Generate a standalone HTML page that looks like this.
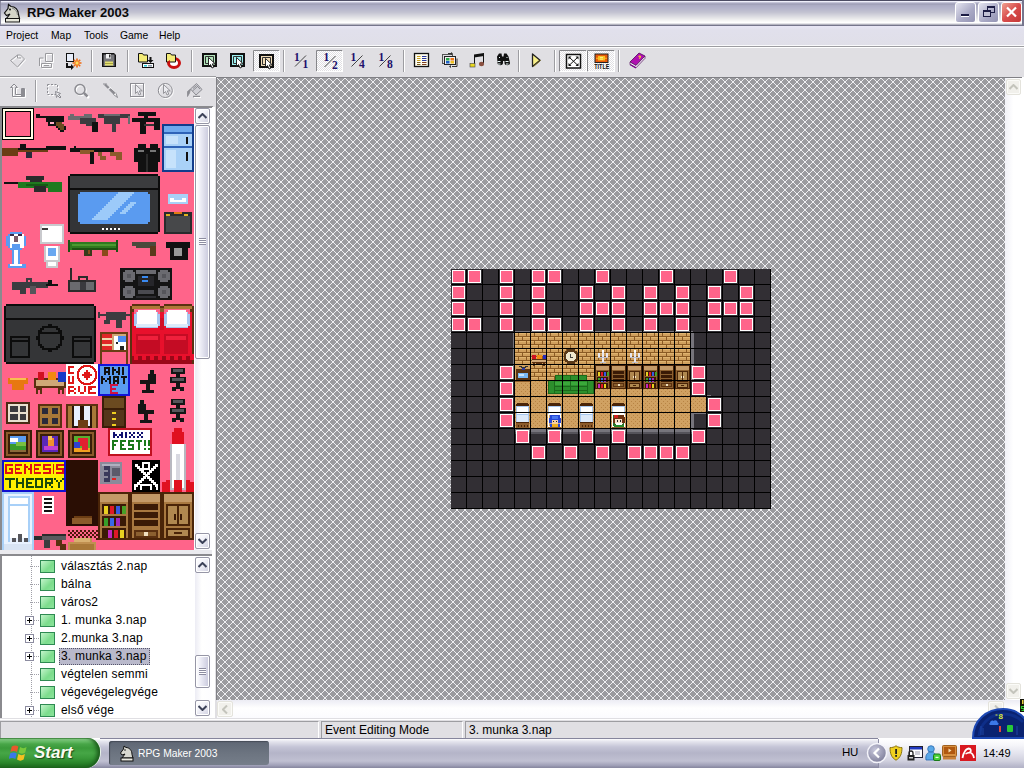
<!DOCTYPE html>
<html><head><meta charset="utf-8">
<style>
*{box-sizing:border-box;margin:0;padding:0}
html,body{width:1024px;height:768px;overflow:hidden;background:#e0dfe3;font-family:"Liberation Sans",sans-serif;font-size:12px;color:#000}
.abs{position:absolute}
#title{left:0;top:0;width:1024px;height:26px;background:linear-gradient(#4c4c64 0.5px,#eeeefa 1.5px,#c4c4d8 2.5px,#a8a8c0 3.5px,#a2a2ba 4.5px,#acacc4 5.5px,#b2b2ca 7.5px,#b8b8cc 9.5px,#c4c4d2 12.5px,#d6d6de 15.5px,#e8e8ea 18.5px,#f4f4f4 20.5px,#ffffff 22.5px,#e4e4e8 23.5px,#b4b4c0 24.5px,#75758b 25.5px)}
#title .txt{left:27px;top:5px;font-weight:bold;font-size:13px;letter-spacing:0px;color:#0a0a0a}
.wb{top:2px;width:21px;height:21px;border-radius:3px;border:1px solid #fff}
#menu{left:0;top:26px;width:1024px;height:20px;background:linear-gradient(#e8e6f6,#e1e0ec 4px,#e0dfe8)}
#menu span{position:absolute;top:3px;font-size:11.5px;transform:scaleX(.9);transform-origin:0 0}
.hsep{left:0;width:1024px;height:2px;border-top:1px solid #9d9da1;border-bottom:1px solid #fff}
#tb1{left:0;top:48px;width:1024px;height:27px;background:#e0dfe3}
#tb2{left:0;top:78px;width:216px;height:28px;background:#e0dfe3}
.vsep{width:2px;border-left:1px solid #9d9da1;border-right:1px solid #fff}
#maparea{left:216px;top:77px;width:789px;height:623px;border-left:1px solid #808085;border-top:1px solid #808085;overflow:hidden}
#status{left:0;top:719px;width:1024px;height:21px;background:#e0dfe3}
#taskbar{left:0;top:739px;width:1024px;height:29px;background:linear-gradient(#fdfdfe 0,#e8e8f0 2px,#c4c4d6 8px,#b4b4c8 14px,#c0c0d2 22px,#9c9cb4 27px,#8b8ba3 28px)}

.sbtn{position:absolute;width:15px;height:16px;border:1px solid #9696a6;border-radius:2px;background:linear-gradient(135deg,#ffffff,#f4f4fa 40%,#d0d0e0);box-shadow:0 0 0 1px #fff inset}
.sbtn svg{position:absolute;left:2px;top:4px}
.track{position:absolute;background:linear-gradient(90deg,#ececf4,#ffffff 40%,#fdfdff)}
.thumb{position:absolute;width:15px;border:1px solid #9696a6;border-radius:2px;background:linear-gradient(90deg,#ffffff,#f0f0f8 30%,#c8c8dc);box-shadow:0 0 0 1px #fff inset}
.grip{position:absolute;left:3px;width:7px;height:7px;background:repeating-linear-gradient(#8c8ca0 0,#8c8ca0 1px,#fff 1px,#fff 2px)}
.tree{position:absolute;left:0;top:554px;width:214px;height:164px;background:#fff;border-top:2px solid #8a8a8e;border-left:2px solid #8a8a8e;overflow:hidden}
.ti{position:absolute;left:-1px;height:18px;width:196px}
.ti .ic{position:absolute;left:39px;top:3px;width:15px;height:13px;border:1px solid #2e8a52;background:linear-gradient(135deg,#c4f4cc,#7cdc8c 60%,#8ce49c)}
.ti .tx{position:absolute;left:58px;top:1px;height:17px;line-height:16px;padding:0 3px 0 2px;font-size:12px;white-space:nowrap;letter-spacing:.2px}
.ti .pm{position:absolute;left:24px;top:5px;width:9px;height:9px;border:1px solid #8c8ca0;background:#fff}
.ti .pm:before{content:"";position:absolute;left:1px;top:3px;width:5px;height:1px;background:#000}
.ti .pm:after{content:"";position:absolute;left:3px;top:1px;width:1px;height:5px;background:#000}
.ti .hl{position:absolute;left:29px;top:9px;width:9px;height:1px;background:repeating-linear-gradient(90deg,#a0a0a8 0,#a0a0a8 1px,transparent 1px,transparent 2px)}
.sp{position:absolute;top:721px;height:18px;border-top:1px solid #9d9da1;border-left:1px solid #9d9da1;border-bottom:1px solid #fff;border-right:1px solid #fff;font-size:12px;line-height:16px;padding-left:3px;white-space:nowrap}
</style></head><body>
<div id="title" class="abs">
<svg class="abs" style="left:3px;top:3px" width="18" height="20" viewBox="0 0 18 20"><path d="M5.500 1.500l2.500 2c4 0 7.500 3 7.500 8l1 4h-13l3.500-4.500-3.500 1.500-2-2.500 3.500-4.500z" fill="#d4d4c8" stroke="#111" stroke-width="1.200"/><rect x="2.500" y="15.500" width="14" height="3.500" fill="#e8e8dc" stroke="#111"/><circle cx="7" cy="6.500" r="1" fill="#111"/><path d="M9 5c3 1 5 3 5.500 7" stroke="#888" fill="none"/></svg>
<div class="abs txt">RPG Maker 2003</div><div class="abs" style="left:0;top:1px;width:1px;height:24px;background:#8a8aa0"></div><div class="abs" style="left:1022px;top:0;width:2px;height:25px;background:#76768e"></div>
<div class="abs wb" style="left:955px;background:linear-gradient(135deg,#e4e4f0,#a8a8c4 60%,#9494b4)"><div class="abs" style="left:5px;top:11px;width:8px;height:3px;background:#1c1c44;border-bottom:1px solid #fff"></div></div>
<div class="abs wb" style="left:978px;background:linear-gradient(135deg,#e4e4f0,#a8a8c4 60%,#9494b4)"><div class="abs" style="left:8px;top:3px;width:8px;height:7px;border:1px solid #1c1c44;border-top-width:2px"></div><div class="abs" style="left:4px;top:7px;width:8px;height:7px;border:1px solid #1c1c44;border-top-width:2px;background:#c0c0d4"></div></div>
<div class="abs wb" style="left:1001px;background:linear-gradient(135deg,#f0a090,#d84c4c 50%,#c43838)"><svg width="19" height="18" style="position:absolute;left:0;top:0"><path d="M5 4.500l9 9M14 4.500l-9 9" stroke="#fff" stroke-width="2.200"/></svg></div>
</div>
<div id="menu" class="abs"><span style="left:6px">Project</span><span style="left:51px">Map</span><span style="left:84px">Tools</span><span style="left:120px">Game</span><span style="left:159px">Help</span></div>
<div class="abs" style="left:0;top:45px;width:1024px;height:1px;background:#fafafc"></div><div class="abs hsep" style="top:46px"></div>
<div id="tb1" class="abs"></div>
<div class="abs hsep" style="top:76px;width:216px"></div>
<div id="tb2" class="abs"></div>
<div id="maparea" class="abs">
<svg width="788" height="625" style="position:absolute;left:0;top:0" shape-rendering="crispEdges">
<defs><pattern id="hatch" width="8" height="8" patternUnits="userSpaceOnUse" x="0" y="0">
<rect width="8" height="8" fill="#9b9b9f"/>
<path fill="#efeff2" d="M0 0h1v1h-1zM1 1h1v1h-1zM2 2h1v1h-1zM3 3h1v1h-1zM4 4h1v1h-1zM5 5h1v1h-1zM6 6h1v1h-1zM7 7h1v1h-1zM7 0h1v1h-1zM6 1h1v1h-1zM5 2h1v1h-1zM4 3h1v1h-1zM3 4h1v1h-1zM2 5h1v1h-1zM1 6h1v1h-1zM0 7h1v1h-1z"/>
</pattern></defs>
<rect width="788" height="625" fill="url(#hatch)"/>
<g transform="translate(234,191)">
<path fill="#322f34" d="M0 0h320v240h-320z"/>
<path fill="#77757c" d="M63 62h179v2h-179zM62 64h2v46h-2zM240 64h3v48h-3zM64 160h178v3h-178z"/>
<path fill="#55535a" d="M64 163h178v2h-178z"/>
<path fill="#77757c" d="M240 142h3v18h-3zM243 142h12v3h-12zM256 126h4v2h-4z"/>
<path fill="#d0a05e" d="M64 64h176v48h-176z"/>
<path fill="#8a5a24" d="M64 67h176v1h-176z"/>
<path fill="#e0b470" d="M64 64h176v1h-176z"/>
<path fill="#8a5a24" d="M67 64h1v3h-1zM75 64h1v3h-1zM83 64h1v3h-1zM91 64h1v3h-1zM99 64h1v3h-1zM107 64h1v3h-1zM115 64h1v3h-1zM123 64h1v3h-1zM131 64h1v3h-1zM139 64h1v3h-1zM147 64h1v3h-1zM155 64h1v3h-1zM163 64h1v3h-1zM171 64h1v3h-1zM179 64h1v3h-1zM187 64h1v3h-1zM195 64h1v3h-1zM203 64h1v3h-1zM211 64h1v3h-1zM219 64h1v3h-1zM227 64h1v3h-1zM235 64h1v3h-1zM64 71h176v1h-176z"/>
<path fill="#e0b470" d="M64 68h176v1h-176z"/>
<path fill="#8a5a24" d="M71 68h1v3h-1zM79 68h1v3h-1zM87 68h1v3h-1zM95 68h1v3h-1zM103 68h1v3h-1zM111 68h1v3h-1zM119 68h1v3h-1zM127 68h1v3h-1zM135 68h1v3h-1zM143 68h1v3h-1zM151 68h1v3h-1zM159 68h1v3h-1zM167 68h1v3h-1zM175 68h1v3h-1zM183 68h1v3h-1zM191 68h1v3h-1zM199 68h1v3h-1zM207 68h1v3h-1zM215 68h1v3h-1zM223 68h1v3h-1zM231 68h1v3h-1zM239 68h1v3h-1zM64 75h176v1h-176z"/>
<path fill="#e0b470" d="M64 72h176v1h-176z"/>
<path fill="#8a5a24" d="M67 72h1v3h-1zM75 72h1v3h-1zM83 72h1v3h-1zM91 72h1v3h-1zM99 72h1v3h-1zM107 72h1v3h-1zM115 72h1v3h-1zM123 72h1v3h-1zM131 72h1v3h-1zM139 72h1v3h-1zM147 72h1v3h-1zM155 72h1v3h-1zM163 72h1v3h-1zM171 72h1v3h-1zM179 72h1v3h-1zM187 72h1v3h-1zM195 72h1v3h-1zM203 72h1v3h-1zM211 72h1v3h-1zM219 72h1v3h-1zM227 72h1v3h-1zM235 72h1v3h-1zM64 79h176v1h-176z"/>
<path fill="#e0b470" d="M64 76h176v1h-176z"/>
<path fill="#8a5a24" d="M71 76h1v3h-1zM79 76h1v3h-1zM87 76h1v3h-1zM95 76h1v3h-1zM103 76h1v3h-1zM111 76h1v3h-1zM119 76h1v3h-1zM127 76h1v3h-1zM135 76h1v3h-1zM143 76h1v3h-1zM151 76h1v3h-1zM159 76h1v3h-1zM167 76h1v3h-1zM175 76h1v3h-1zM183 76h1v3h-1zM191 76h1v3h-1zM199 76h1v3h-1zM207 76h1v3h-1zM215 76h1v3h-1zM223 76h1v3h-1zM231 76h1v3h-1zM239 76h1v3h-1zM64 83h176v1h-176z"/>
<path fill="#e0b470" d="M64 80h176v1h-176z"/>
<path fill="#8a5a24" d="M67 80h1v3h-1zM75 80h1v3h-1zM83 80h1v3h-1zM91 80h1v3h-1zM99 80h1v3h-1zM107 80h1v3h-1zM115 80h1v3h-1zM123 80h1v3h-1zM131 80h1v3h-1zM139 80h1v3h-1zM147 80h1v3h-1zM155 80h1v3h-1zM163 80h1v3h-1zM171 80h1v3h-1zM179 80h1v3h-1zM187 80h1v3h-1zM195 80h1v3h-1zM203 80h1v3h-1zM211 80h1v3h-1zM219 80h1v3h-1zM227 80h1v3h-1zM235 80h1v3h-1zM64 87h176v1h-176z"/>
<path fill="#e0b470" d="M64 84h176v1h-176z"/>
<path fill="#8a5a24" d="M71 84h1v3h-1zM79 84h1v3h-1zM87 84h1v3h-1zM95 84h1v3h-1zM103 84h1v3h-1zM111 84h1v3h-1zM119 84h1v3h-1zM127 84h1v3h-1zM135 84h1v3h-1zM143 84h1v3h-1zM151 84h1v3h-1zM159 84h1v3h-1zM167 84h1v3h-1zM175 84h1v3h-1zM183 84h1v3h-1zM191 84h1v3h-1zM199 84h1v3h-1zM207 84h1v3h-1zM215 84h1v3h-1zM223 84h1v3h-1zM231 84h1v3h-1zM239 84h1v3h-1zM64 91h176v1h-176z"/>
<path fill="#e0b470" d="M64 88h176v1h-176z"/>
<path fill="#8a5a24" d="M67 88h1v3h-1zM75 88h1v3h-1zM83 88h1v3h-1zM91 88h1v3h-1zM99 88h1v3h-1zM107 88h1v3h-1zM115 88h1v3h-1zM123 88h1v3h-1zM131 88h1v3h-1zM139 88h1v3h-1zM147 88h1v3h-1zM155 88h1v3h-1zM163 88h1v3h-1zM171 88h1v3h-1zM179 88h1v3h-1zM187 88h1v3h-1zM195 88h1v3h-1zM203 88h1v3h-1zM211 88h1v3h-1zM219 88h1v3h-1zM227 88h1v3h-1zM235 88h1v3h-1zM64 95h176v1h-176z"/>
<path fill="#e0b470" d="M64 92h176v1h-176z"/>
<path fill="#8a5a24" d="M71 92h1v3h-1zM79 92h1v3h-1zM87 92h1v3h-1zM95 92h1v3h-1zM103 92h1v3h-1zM111 92h1v3h-1zM119 92h1v3h-1zM127 92h1v3h-1zM135 92h1v3h-1zM143 92h1v3h-1zM151 92h1v3h-1zM159 92h1v3h-1zM167 92h1v3h-1zM175 92h1v3h-1zM183 92h1v3h-1zM191 92h1v3h-1zM199 92h1v3h-1zM207 92h1v3h-1zM215 92h1v3h-1zM223 92h1v3h-1zM231 92h1v3h-1zM239 92h1v3h-1zM64 99h176v1h-176z"/>
<path fill="#e0b470" d="M64 96h176v1h-176z"/>
<path fill="#8a5a24" d="M67 96h1v3h-1zM75 96h1v3h-1zM83 96h1v3h-1zM91 96h1v3h-1zM99 96h1v3h-1zM107 96h1v3h-1zM115 96h1v3h-1zM123 96h1v3h-1zM131 96h1v3h-1zM139 96h1v3h-1zM147 96h1v3h-1zM155 96h1v3h-1zM163 96h1v3h-1zM171 96h1v3h-1zM179 96h1v3h-1zM187 96h1v3h-1zM195 96h1v3h-1zM203 96h1v3h-1zM211 96h1v3h-1zM219 96h1v3h-1zM227 96h1v3h-1zM235 96h1v3h-1zM64 103h176v1h-176z"/>
<path fill="#e0b470" d="M64 100h176v1h-176z"/>
<path fill="#8a5a24" d="M71 100h1v3h-1zM79 100h1v3h-1zM87 100h1v3h-1zM95 100h1v3h-1zM103 100h1v3h-1zM111 100h1v3h-1zM119 100h1v3h-1zM127 100h1v3h-1zM135 100h1v3h-1zM143 100h1v3h-1zM151 100h1v3h-1zM159 100h1v3h-1zM167 100h1v3h-1zM175 100h1v3h-1zM183 100h1v3h-1zM191 100h1v3h-1zM199 100h1v3h-1zM207 100h1v3h-1zM215 100h1v3h-1zM223 100h1v3h-1zM231 100h1v3h-1zM239 100h1v3h-1zM64 107h176v1h-176z"/>
<path fill="#e0b470" d="M64 104h176v1h-176z"/>
<path fill="#8a5a24" d="M67 104h1v3h-1zM75 104h1v3h-1zM83 104h1v3h-1zM91 104h1v3h-1zM99 104h1v3h-1zM107 104h1v3h-1zM115 104h1v3h-1zM123 104h1v3h-1zM131 104h1v3h-1zM139 104h1v3h-1zM147 104h1v3h-1zM155 104h1v3h-1zM163 104h1v3h-1zM171 104h1v3h-1zM179 104h1v3h-1zM187 104h1v3h-1zM195 104h1v3h-1zM203 104h1v3h-1zM211 104h1v3h-1zM219 104h1v3h-1zM227 104h1v3h-1zM235 104h1v3h-1zM64 111h176v1h-176z"/>
<path fill="#e0b470" d="M64 108h176v1h-176z"/>
<path fill="#8a5a24" d="M71 108h1v3h-1zM79 108h1v3h-1zM87 108h1v3h-1zM95 108h1v3h-1zM103 108h1v3h-1zM111 108h1v3h-1zM119 108h1v3h-1zM127 108h1v3h-1zM135 108h1v3h-1zM143 108h1v3h-1zM151 108h1v3h-1zM159 108h1v3h-1zM167 108h1v3h-1zM175 108h1v3h-1zM183 108h1v3h-1zM191 108h1v3h-1zM199 108h1v3h-1zM207 108h1v3h-1zM215 108h1v3h-1zM223 108h1v3h-1zM231 108h1v3h-1zM239 108h1v3h-1z"/>
<path fill="#d0a162" d="M64 112h176v48h-176zM240 128h16v16h-16z"/>
<path fill="#b88444" d="M64 112h1v1h-1zM68 112h1v1h-1zM72 112h1v1h-1zM76 112h1v1h-1zM80 112h1v1h-1zM84 112h1v1h-1zM88 112h1v1h-1zM92 112h1v1h-1zM96 112h1v1h-1zM100 112h1v1h-1zM104 112h1v1h-1zM108 112h1v1h-1zM112 112h1v1h-1zM116 112h1v1h-1zM120 112h1v1h-1zM124 112h1v1h-1zM128 112h1v1h-1zM132 112h1v1h-1zM136 112h1v1h-1zM140 112h1v1h-1zM144 112h1v1h-1zM148 112h1v1h-1zM152 112h1v1h-1zM156 112h1v1h-1zM160 112h1v1h-1zM164 112h1v1h-1zM168 112h1v1h-1zM172 112h1v1h-1zM176 112h1v1h-1zM180 112h1v1h-1zM184 112h1v1h-1zM188 112h1v1h-1zM192 112h1v1h-1zM196 112h1v1h-1zM200 112h1v1h-1zM204 112h1v1h-1zM208 112h1v1h-1zM212 112h1v1h-1zM216 112h1v1h-1zM220 112h1v1h-1zM224 112h1v1h-1zM228 112h1v1h-1zM232 112h1v1h-1zM236 112h1v1h-1zM66 114h1v1h-1zM70 114h1v1h-1zM74 114h1v1h-1zM78 114h1v1h-1zM82 114h1v1h-1zM86 114h1v1h-1zM90 114h1v1h-1zM94 114h1v1h-1zM98 114h1v1h-1zM102 114h1v1h-1zM106 114h1v1h-1zM110 114h1v1h-1zM114 114h1v1h-1zM118 114h1v1h-1zM122 114h1v1h-1zM126 114h1v1h-1zM130 114h1v1h-1zM134 114h1v1h-1zM138 114h1v1h-1zM142 114h1v1h-1zM146 114h1v1h-1zM150 114h1v1h-1zM154 114h1v1h-1zM158 114h1v1h-1zM162 114h1v1h-1zM166 114h1v1h-1zM170 114h1v1h-1zM174 114h1v1h-1zM178 114h1v1h-1zM182 114h1v1h-1zM186 114h1v1h-1zM190 114h1v1h-1zM194 114h1v1h-1zM198 114h1v1h-1zM202 114h1v1h-1zM206 114h1v1h-1zM210 114h1v1h-1zM214 114h1v1h-1zM218 114h1v1h-1zM222 114h1v1h-1zM226 114h1v1h-1zM230 114h1v1h-1zM234 114h1v1h-1zM238 114h1v1h-1zM64 116h1v1h-1zM68 116h1v1h-1zM72 116h1v1h-1zM76 116h1v1h-1zM80 116h1v1h-1zM84 116h1v1h-1zM88 116h1v1h-1zM92 116h1v1h-1zM96 116h1v1h-1zM100 116h1v1h-1zM104 116h1v1h-1zM108 116h1v1h-1zM112 116h1v1h-1zM116 116h1v1h-1zM120 116h1v1h-1zM124 116h1v1h-1zM128 116h1v1h-1zM132 116h1v1h-1zM136 116h1v1h-1zM140 116h1v1h-1zM144 116h1v1h-1zM148 116h1v1h-1zM152 116h1v1h-1zM156 116h1v1h-1zM160 116h1v1h-1zM164 116h1v1h-1zM168 116h1v1h-1zM172 116h1v1h-1zM176 116h1v1h-1zM180 116h1v1h-1zM184 116h1v1h-1zM188 116h1v1h-1zM192 116h1v1h-1zM196 116h1v1h-1zM200 116h1v1h-1zM204 116h1v1h-1zM208 116h1v1h-1zM212 116h1v1h-1zM216 116h1v1h-1zM220 116h1v1h-1zM224 116h1v1h-1zM228 116h1v1h-1zM232 116h1v1h-1zM236 116h1v1h-1zM66 118h1v1h-1zM70 118h1v1h-1zM74 118h1v1h-1zM78 118h1v1h-1zM82 118h1v1h-1zM86 118h1v1h-1zM90 118h1v1h-1zM94 118h1v1h-1zM98 118h1v1h-1zM102 118h1v1h-1zM106 118h1v1h-1zM110 118h1v1h-1zM114 118h1v1h-1zM118 118h1v1h-1zM122 118h1v1h-1zM126 118h1v1h-1zM130 118h1v1h-1zM134 118h1v1h-1zM138 118h1v1h-1zM142 118h1v1h-1zM146 118h1v1h-1zM150 118h1v1h-1zM154 118h1v1h-1zM158 118h1v1h-1zM162 118h1v1h-1zM166 118h1v1h-1zM170 118h1v1h-1zM174 118h1v1h-1zM178 118h1v1h-1zM182 118h1v1h-1zM186 118h1v1h-1zM190 118h1v1h-1zM194 118h1v1h-1zM198 118h1v1h-1zM202 118h1v1h-1zM206 118h1v1h-1zM210 118h1v1h-1zM214 118h1v1h-1zM218 118h1v1h-1zM222 118h1v1h-1zM226 118h1v1h-1zM230 118h1v1h-1zM234 118h1v1h-1zM238 118h1v1h-1zM64 120h1v1h-1zM68 120h1v1h-1zM72 120h1v1h-1zM76 120h1v1h-1zM80 120h1v1h-1zM84 120h1v1h-1zM88 120h1v1h-1zM92 120h1v1h-1zM96 120h1v1h-1zM100 120h1v1h-1zM104 120h1v1h-1zM108 120h1v1h-1zM112 120h1v1h-1zM116 120h1v1h-1zM120 120h1v1h-1zM124 120h1v1h-1zM128 120h1v1h-1zM132 120h1v1h-1zM136 120h1v1h-1zM140 120h1v1h-1zM144 120h1v1h-1zM148 120h1v1h-1zM152 120h1v1h-1zM156 120h1v1h-1zM160 120h1v1h-1zM164 120h1v1h-1zM168 120h1v1h-1zM172 120h1v1h-1zM176 120h1v1h-1zM180 120h1v1h-1zM184 120h1v1h-1zM188 120h1v1h-1zM192 120h1v1h-1zM196 120h1v1h-1zM200 120h1v1h-1zM204 120h1v1h-1zM208 120h1v1h-1zM212 120h1v1h-1zM216 120h1v1h-1zM220 120h1v1h-1zM224 120h1v1h-1zM228 120h1v1h-1zM232 120h1v1h-1zM236 120h1v1h-1zM66 122h1v1h-1zM70 122h1v1h-1zM74 122h1v1h-1zM78 122h1v1h-1zM82 122h1v1h-1zM86 122h1v1h-1zM90 122h1v1h-1zM94 122h1v1h-1zM98 122h1v1h-1zM102 122h1v1h-1zM106 122h1v1h-1zM110 122h1v1h-1zM114 122h1v1h-1zM118 122h1v1h-1zM122 122h1v1h-1zM126 122h1v1h-1zM130 122h1v1h-1zM134 122h1v1h-1zM138 122h1v1h-1zM142 122h1v1h-1zM146 122h1v1h-1zM150 122h1v1h-1zM154 122h1v1h-1zM158 122h1v1h-1zM162 122h1v1h-1zM166 122h1v1h-1zM170 122h1v1h-1zM174 122h1v1h-1zM178 122h1v1h-1zM182 122h1v1h-1zM186 122h1v1h-1zM190 122h1v1h-1zM194 122h1v1h-1zM198 122h1v1h-1zM202 122h1v1h-1zM206 122h1v1h-1zM210 122h1v1h-1zM214 122h1v1h-1zM218 122h1v1h-1zM222 122h1v1h-1zM226 122h1v1h-1zM230 122h1v1h-1zM234 122h1v1h-1zM238 122h1v1h-1zM64 124h1v1h-1zM68 124h1v1h-1zM72 124h1v1h-1zM76 124h1v1h-1zM80 124h1v1h-1zM84 124h1v1h-1zM88 124h1v1h-1zM92 124h1v1h-1zM96 124h1v1h-1zM100 124h1v1h-1zM104 124h1v1h-1zM108 124h1v1h-1zM112 124h1v1h-1zM116 124h1v1h-1zM120 124h1v1h-1zM124 124h1v1h-1zM128 124h1v1h-1zM132 124h1v1h-1zM136 124h1v1h-1zM140 124h1v1h-1zM144 124h1v1h-1zM148 124h1v1h-1zM152 124h1v1h-1zM156 124h1v1h-1zM160 124h1v1h-1zM164 124h1v1h-1zM168 124h1v1h-1zM172 124h1v1h-1zM176 124h1v1h-1zM180 124h1v1h-1zM184 124h1v1h-1zM188 124h1v1h-1zM192 124h1v1h-1zM196 124h1v1h-1zM200 124h1v1h-1zM204 124h1v1h-1zM208 124h1v1h-1zM212 124h1v1h-1zM216 124h1v1h-1zM220 124h1v1h-1zM224 124h1v1h-1zM228 124h1v1h-1zM232 124h1v1h-1zM236 124h1v1h-1zM66 126h1v1h-1zM70 126h1v1h-1zM74 126h1v1h-1zM78 126h1v1h-1zM82 126h1v1h-1zM86 126h1v1h-1zM90 126h1v1h-1zM94 126h1v1h-1zM98 126h1v1h-1zM102 126h1v1h-1zM106 126h1v1h-1zM110 126h1v1h-1zM114 126h1v1h-1zM118 126h1v1h-1zM122 126h1v1h-1zM126 126h1v1h-1zM130 126h1v1h-1zM134 126h1v1h-1zM138 126h1v1h-1zM142 126h1v1h-1zM146 126h1v1h-1zM150 126h1v1h-1zM154 126h1v1h-1zM158 126h1v1h-1zM162 126h1v1h-1zM166 126h1v1h-1zM170 126h1v1h-1zM174 126h1v1h-1zM178 126h1v1h-1zM182 126h1v1h-1zM186 126h1v1h-1zM190 126h1v1h-1zM194 126h1v1h-1zM198 126h1v1h-1zM202 126h1v1h-1zM206 126h1v1h-1zM210 126h1v1h-1zM214 126h1v1h-1zM218 126h1v1h-1zM222 126h1v1h-1zM226 126h1v1h-1zM230 126h1v1h-1zM234 126h1v1h-1zM238 126h1v1h-1zM64 128h1v1h-1zM68 128h1v1h-1zM72 128h1v1h-1zM76 128h1v1h-1zM80 128h1v1h-1zM84 128h1v1h-1zM88 128h1v1h-1zM92 128h1v1h-1zM96 128h1v1h-1zM100 128h1v1h-1zM104 128h1v1h-1zM108 128h1v1h-1zM112 128h1v1h-1zM116 128h1v1h-1zM120 128h1v1h-1zM124 128h1v1h-1zM128 128h1v1h-1zM132 128h1v1h-1zM136 128h1v1h-1zM140 128h1v1h-1zM144 128h1v1h-1zM148 128h1v1h-1zM152 128h1v1h-1zM156 128h1v1h-1zM160 128h1v1h-1zM164 128h1v1h-1zM168 128h1v1h-1zM172 128h1v1h-1zM176 128h1v1h-1zM180 128h1v1h-1zM184 128h1v1h-1zM188 128h1v1h-1zM192 128h1v1h-1zM196 128h1v1h-1zM200 128h1v1h-1zM204 128h1v1h-1zM208 128h1v1h-1zM212 128h1v1h-1zM216 128h1v1h-1zM220 128h1v1h-1zM224 128h1v1h-1zM228 128h1v1h-1zM232 128h1v1h-1zM236 128h1v1h-1zM66 130h1v1h-1zM70 130h1v1h-1zM74 130h1v1h-1zM78 130h1v1h-1zM82 130h1v1h-1zM86 130h1v1h-1zM90 130h1v1h-1zM94 130h1v1h-1zM98 130h1v1h-1zM102 130h1v1h-1zM106 130h1v1h-1zM110 130h1v1h-1zM114 130h1v1h-1zM118 130h1v1h-1zM122 130h1v1h-1zM126 130h1v1h-1zM130 130h1v1h-1zM134 130h1v1h-1zM138 130h1v1h-1zM142 130h1v1h-1zM146 130h1v1h-1zM150 130h1v1h-1zM154 130h1v1h-1zM158 130h1v1h-1zM162 130h1v1h-1zM166 130h1v1h-1zM170 130h1v1h-1zM174 130h1v1h-1zM178 130h1v1h-1zM182 130h1v1h-1zM186 130h1v1h-1zM190 130h1v1h-1zM194 130h1v1h-1zM198 130h1v1h-1zM202 130h1v1h-1zM206 130h1v1h-1zM210 130h1v1h-1zM214 130h1v1h-1zM218 130h1v1h-1zM222 130h1v1h-1zM226 130h1v1h-1zM230 130h1v1h-1zM234 130h1v1h-1zM238 130h1v1h-1zM64 132h1v1h-1zM68 132h1v1h-1zM72 132h1v1h-1zM76 132h1v1h-1zM80 132h1v1h-1zM84 132h1v1h-1zM88 132h1v1h-1zM92 132h1v1h-1zM96 132h1v1h-1zM100 132h1v1h-1zM104 132h1v1h-1zM108 132h1v1h-1zM112 132h1v1h-1zM116 132h1v1h-1zM120 132h1v1h-1zM124 132h1v1h-1zM128 132h1v1h-1zM132 132h1v1h-1zM136 132h1v1h-1zM140 132h1v1h-1zM144 132h1v1h-1zM148 132h1v1h-1zM152 132h1v1h-1zM156 132h1v1h-1zM160 132h1v1h-1zM164 132h1v1h-1zM168 132h1v1h-1zM172 132h1v1h-1zM176 132h1v1h-1zM180 132h1v1h-1zM184 132h1v1h-1zM188 132h1v1h-1zM192 132h1v1h-1zM196 132h1v1h-1zM200 132h1v1h-1zM204 132h1v1h-1zM208 132h1v1h-1zM212 132h1v1h-1zM216 132h1v1h-1zM220 132h1v1h-1zM224 132h1v1h-1zM228 132h1v1h-1zM232 132h1v1h-1zM236 132h1v1h-1zM66 134h1v1h-1zM70 134h1v1h-1zM74 134h1v1h-1zM78 134h1v1h-1zM82 134h1v1h-1zM86 134h1v1h-1zM90 134h1v1h-1zM94 134h1v1h-1zM98 134h1v1h-1zM102 134h1v1h-1zM106 134h1v1h-1zM110 134h1v1h-1zM114 134h1v1h-1zM118 134h1v1h-1zM122 134h1v1h-1zM126 134h1v1h-1zM130 134h1v1h-1zM134 134h1v1h-1zM138 134h1v1h-1zM142 134h1v1h-1zM146 134h1v1h-1zM150 134h1v1h-1zM154 134h1v1h-1zM158 134h1v1h-1zM162 134h1v1h-1zM166 134h1v1h-1zM170 134h1v1h-1zM174 134h1v1h-1zM178 134h1v1h-1zM182 134h1v1h-1zM186 134h1v1h-1zM190 134h1v1h-1zM194 134h1v1h-1zM198 134h1v1h-1zM202 134h1v1h-1zM206 134h1v1h-1zM210 134h1v1h-1zM214 134h1v1h-1zM218 134h1v1h-1zM222 134h1v1h-1zM226 134h1v1h-1zM230 134h1v1h-1zM234 134h1v1h-1zM238 134h1v1h-1zM64 136h1v1h-1zM68 136h1v1h-1zM72 136h1v1h-1zM76 136h1v1h-1zM80 136h1v1h-1zM84 136h1v1h-1zM88 136h1v1h-1zM92 136h1v1h-1zM96 136h1v1h-1zM100 136h1v1h-1zM104 136h1v1h-1zM108 136h1v1h-1zM112 136h1v1h-1zM116 136h1v1h-1zM120 136h1v1h-1zM124 136h1v1h-1zM128 136h1v1h-1zM132 136h1v1h-1zM136 136h1v1h-1zM140 136h1v1h-1zM144 136h1v1h-1zM148 136h1v1h-1zM152 136h1v1h-1zM156 136h1v1h-1zM160 136h1v1h-1zM164 136h1v1h-1zM168 136h1v1h-1zM172 136h1v1h-1zM176 136h1v1h-1zM180 136h1v1h-1zM184 136h1v1h-1zM188 136h1v1h-1zM192 136h1v1h-1zM196 136h1v1h-1zM200 136h1v1h-1zM204 136h1v1h-1zM208 136h1v1h-1zM212 136h1v1h-1zM216 136h1v1h-1zM220 136h1v1h-1zM224 136h1v1h-1zM228 136h1v1h-1zM232 136h1v1h-1zM236 136h1v1h-1zM66 138h1v1h-1zM70 138h1v1h-1zM74 138h1v1h-1zM78 138h1v1h-1zM82 138h1v1h-1zM86 138h1v1h-1zM90 138h1v1h-1zM94 138h1v1h-1zM98 138h1v1h-1zM102 138h1v1h-1zM106 138h1v1h-1zM110 138h1v1h-1zM114 138h1v1h-1zM118 138h1v1h-1zM122 138h1v1h-1zM126 138h1v1h-1zM130 138h1v1h-1zM134 138h1v1h-1zM138 138h1v1h-1zM142 138h1v1h-1zM146 138h1v1h-1zM150 138h1v1h-1zM154 138h1v1h-1zM158 138h1v1h-1zM162 138h1v1h-1zM166 138h1v1h-1zM170 138h1v1h-1zM174 138h1v1h-1zM178 138h1v1h-1zM182 138h1v1h-1zM186 138h1v1h-1zM190 138h1v1h-1zM194 138h1v1h-1zM198 138h1v1h-1zM202 138h1v1h-1zM206 138h1v1h-1zM210 138h1v1h-1zM214 138h1v1h-1zM218 138h1v1h-1zM222 138h1v1h-1zM226 138h1v1h-1zM230 138h1v1h-1zM234 138h1v1h-1zM238 138h1v1h-1zM64 140h1v1h-1zM68 140h1v1h-1zM72 140h1v1h-1zM76 140h1v1h-1zM80 140h1v1h-1zM84 140h1v1h-1zM88 140h1v1h-1zM92 140h1v1h-1zM96 140h1v1h-1zM100 140h1v1h-1zM104 140h1v1h-1zM108 140h1v1h-1zM112 140h1v1h-1zM116 140h1v1h-1zM120 140h1v1h-1zM124 140h1v1h-1zM128 140h1v1h-1zM132 140h1v1h-1zM136 140h1v1h-1zM140 140h1v1h-1zM144 140h1v1h-1zM148 140h1v1h-1zM152 140h1v1h-1zM156 140h1v1h-1zM160 140h1v1h-1zM164 140h1v1h-1zM168 140h1v1h-1zM172 140h1v1h-1zM176 140h1v1h-1zM180 140h1v1h-1zM184 140h1v1h-1zM188 140h1v1h-1zM192 140h1v1h-1zM196 140h1v1h-1zM200 140h1v1h-1zM204 140h1v1h-1zM208 140h1v1h-1zM212 140h1v1h-1zM216 140h1v1h-1zM220 140h1v1h-1zM224 140h1v1h-1zM228 140h1v1h-1zM232 140h1v1h-1zM236 140h1v1h-1zM66 142h1v1h-1zM70 142h1v1h-1zM74 142h1v1h-1zM78 142h1v1h-1zM82 142h1v1h-1zM86 142h1v1h-1zM90 142h1v1h-1zM94 142h1v1h-1zM98 142h1v1h-1zM102 142h1v1h-1zM106 142h1v1h-1zM110 142h1v1h-1zM114 142h1v1h-1zM118 142h1v1h-1zM122 142h1v1h-1zM126 142h1v1h-1zM130 142h1v1h-1zM134 142h1v1h-1zM138 142h1v1h-1zM142 142h1v1h-1zM146 142h1v1h-1zM150 142h1v1h-1zM154 142h1v1h-1zM158 142h1v1h-1zM162 142h1v1h-1zM166 142h1v1h-1zM170 142h1v1h-1zM174 142h1v1h-1zM178 142h1v1h-1zM182 142h1v1h-1zM186 142h1v1h-1zM190 142h1v1h-1zM194 142h1v1h-1zM198 142h1v1h-1zM202 142h1v1h-1zM206 142h1v1h-1zM210 142h1v1h-1zM214 142h1v1h-1zM218 142h1v1h-1zM222 142h1v1h-1zM226 142h1v1h-1zM230 142h1v1h-1zM234 142h1v1h-1zM238 142h1v1h-1zM64 144h1v1h-1zM68 144h1v1h-1zM72 144h1v1h-1zM76 144h1v1h-1zM80 144h1v1h-1zM84 144h1v1h-1zM88 144h1v1h-1zM92 144h1v1h-1zM96 144h1v1h-1zM100 144h1v1h-1zM104 144h1v1h-1zM108 144h1v1h-1zM112 144h1v1h-1zM116 144h1v1h-1zM120 144h1v1h-1zM124 144h1v1h-1zM128 144h1v1h-1zM132 144h1v1h-1zM136 144h1v1h-1zM140 144h1v1h-1zM144 144h1v1h-1zM148 144h1v1h-1zM152 144h1v1h-1zM156 144h1v1h-1zM160 144h1v1h-1zM164 144h1v1h-1zM168 144h1v1h-1zM172 144h1v1h-1zM176 144h1v1h-1zM180 144h1v1h-1zM184 144h1v1h-1zM188 144h1v1h-1zM192 144h1v1h-1zM196 144h1v1h-1zM200 144h1v1h-1zM204 144h1v1h-1zM208 144h1v1h-1zM212 144h1v1h-1zM216 144h1v1h-1zM220 144h1v1h-1zM224 144h1v1h-1zM228 144h1v1h-1zM232 144h1v1h-1zM236 144h1v1h-1zM66 146h1v1h-1zM70 146h1v1h-1zM74 146h1v1h-1zM78 146h1v1h-1zM82 146h1v1h-1zM86 146h1v1h-1zM90 146h1v1h-1zM94 146h1v1h-1zM98 146h1v1h-1zM102 146h1v1h-1zM106 146h1v1h-1zM110 146h1v1h-1zM114 146h1v1h-1zM118 146h1v1h-1zM122 146h1v1h-1zM126 146h1v1h-1zM130 146h1v1h-1zM134 146h1v1h-1zM138 146h1v1h-1zM142 146h1v1h-1zM146 146h1v1h-1zM150 146h1v1h-1zM154 146h1v1h-1zM158 146h1v1h-1zM162 146h1v1h-1zM166 146h1v1h-1zM170 146h1v1h-1zM174 146h1v1h-1zM178 146h1v1h-1zM182 146h1v1h-1zM186 146h1v1h-1zM190 146h1v1h-1zM194 146h1v1h-1zM198 146h1v1h-1zM202 146h1v1h-1zM206 146h1v1h-1zM210 146h1v1h-1zM214 146h1v1h-1zM218 146h1v1h-1zM222 146h1v1h-1zM226 146h1v1h-1zM230 146h1v1h-1zM234 146h1v1h-1zM238 146h1v1h-1zM64 148h1v1h-1zM68 148h1v1h-1zM72 148h1v1h-1zM76 148h1v1h-1zM80 148h1v1h-1zM84 148h1v1h-1zM88 148h1v1h-1zM92 148h1v1h-1zM96 148h1v1h-1zM100 148h1v1h-1zM104 148h1v1h-1zM108 148h1v1h-1zM112 148h1v1h-1zM116 148h1v1h-1zM120 148h1v1h-1zM124 148h1v1h-1zM128 148h1v1h-1zM132 148h1v1h-1zM136 148h1v1h-1zM140 148h1v1h-1zM144 148h1v1h-1zM148 148h1v1h-1zM152 148h1v1h-1zM156 148h1v1h-1zM160 148h1v1h-1zM164 148h1v1h-1zM168 148h1v1h-1zM172 148h1v1h-1zM176 148h1v1h-1zM180 148h1v1h-1zM184 148h1v1h-1zM188 148h1v1h-1zM192 148h1v1h-1zM196 148h1v1h-1zM200 148h1v1h-1zM204 148h1v1h-1zM208 148h1v1h-1zM212 148h1v1h-1zM216 148h1v1h-1zM220 148h1v1h-1zM224 148h1v1h-1zM228 148h1v1h-1zM232 148h1v1h-1zM236 148h1v1h-1zM66 150h1v1h-1zM70 150h1v1h-1zM74 150h1v1h-1zM78 150h1v1h-1zM82 150h1v1h-1zM86 150h1v1h-1zM90 150h1v1h-1zM94 150h1v1h-1zM98 150h1v1h-1zM102 150h1v1h-1zM106 150h1v1h-1zM110 150h1v1h-1zM114 150h1v1h-1zM118 150h1v1h-1zM122 150h1v1h-1zM126 150h1v1h-1zM130 150h1v1h-1zM134 150h1v1h-1zM138 150h1v1h-1zM142 150h1v1h-1zM146 150h1v1h-1zM150 150h1v1h-1zM154 150h1v1h-1zM158 150h1v1h-1zM162 150h1v1h-1zM166 150h1v1h-1zM170 150h1v1h-1zM174 150h1v1h-1zM178 150h1v1h-1zM182 150h1v1h-1zM186 150h1v1h-1zM190 150h1v1h-1zM194 150h1v1h-1zM198 150h1v1h-1zM202 150h1v1h-1zM206 150h1v1h-1zM210 150h1v1h-1zM214 150h1v1h-1zM218 150h1v1h-1zM222 150h1v1h-1zM226 150h1v1h-1zM230 150h1v1h-1zM234 150h1v1h-1zM238 150h1v1h-1zM64 152h1v1h-1zM68 152h1v1h-1zM72 152h1v1h-1zM76 152h1v1h-1zM80 152h1v1h-1zM84 152h1v1h-1zM88 152h1v1h-1zM92 152h1v1h-1zM96 152h1v1h-1zM100 152h1v1h-1zM104 152h1v1h-1zM108 152h1v1h-1zM112 152h1v1h-1zM116 152h1v1h-1zM120 152h1v1h-1zM124 152h1v1h-1zM128 152h1v1h-1zM132 152h1v1h-1zM136 152h1v1h-1zM140 152h1v1h-1zM144 152h1v1h-1zM148 152h1v1h-1zM152 152h1v1h-1zM156 152h1v1h-1zM160 152h1v1h-1zM164 152h1v1h-1zM168 152h1v1h-1zM172 152h1v1h-1zM176 152h1v1h-1zM180 152h1v1h-1zM184 152h1v1h-1zM188 152h1v1h-1zM192 152h1v1h-1zM196 152h1v1h-1zM200 152h1v1h-1zM204 152h1v1h-1zM208 152h1v1h-1zM212 152h1v1h-1zM216 152h1v1h-1zM220 152h1v1h-1zM224 152h1v1h-1zM228 152h1v1h-1zM232 152h1v1h-1zM236 152h1v1h-1zM66 154h1v1h-1zM70 154h1v1h-1zM74 154h1v1h-1zM78 154h1v1h-1zM82 154h1v1h-1zM86 154h1v1h-1zM90 154h1v1h-1zM94 154h1v1h-1zM98 154h1v1h-1zM102 154h1v1h-1zM106 154h1v1h-1zM110 154h1v1h-1zM114 154h1v1h-1zM118 154h1v1h-1zM122 154h1v1h-1zM126 154h1v1h-1zM130 154h1v1h-1zM134 154h1v1h-1zM138 154h1v1h-1zM142 154h1v1h-1zM146 154h1v1h-1zM150 154h1v1h-1zM154 154h1v1h-1zM158 154h1v1h-1zM162 154h1v1h-1zM166 154h1v1h-1zM170 154h1v1h-1zM174 154h1v1h-1zM178 154h1v1h-1zM182 154h1v1h-1zM186 154h1v1h-1zM190 154h1v1h-1zM194 154h1v1h-1zM198 154h1v1h-1zM202 154h1v1h-1zM206 154h1v1h-1zM210 154h1v1h-1zM214 154h1v1h-1zM218 154h1v1h-1zM222 154h1v1h-1zM226 154h1v1h-1zM230 154h1v1h-1zM234 154h1v1h-1zM238 154h1v1h-1zM64 156h1v1h-1zM68 156h1v1h-1zM72 156h1v1h-1zM76 156h1v1h-1zM80 156h1v1h-1zM84 156h1v1h-1zM88 156h1v1h-1zM92 156h1v1h-1zM96 156h1v1h-1zM100 156h1v1h-1zM104 156h1v1h-1zM108 156h1v1h-1zM112 156h1v1h-1zM116 156h1v1h-1zM120 156h1v1h-1zM124 156h1v1h-1zM128 156h1v1h-1zM132 156h1v1h-1zM136 156h1v1h-1zM140 156h1v1h-1zM144 156h1v1h-1zM148 156h1v1h-1zM152 156h1v1h-1zM156 156h1v1h-1zM160 156h1v1h-1zM164 156h1v1h-1zM168 156h1v1h-1zM172 156h1v1h-1zM176 156h1v1h-1zM180 156h1v1h-1zM184 156h1v1h-1zM188 156h1v1h-1zM192 156h1v1h-1zM196 156h1v1h-1zM200 156h1v1h-1zM204 156h1v1h-1zM208 156h1v1h-1zM212 156h1v1h-1zM216 156h1v1h-1zM220 156h1v1h-1zM224 156h1v1h-1zM228 156h1v1h-1zM232 156h1v1h-1zM236 156h1v1h-1zM66 158h1v1h-1zM70 158h1v1h-1zM74 158h1v1h-1zM78 158h1v1h-1zM82 158h1v1h-1zM86 158h1v1h-1zM90 158h1v1h-1zM94 158h1v1h-1zM98 158h1v1h-1zM102 158h1v1h-1zM106 158h1v1h-1zM110 158h1v1h-1zM114 158h1v1h-1zM118 158h1v1h-1zM122 158h1v1h-1zM126 158h1v1h-1zM130 158h1v1h-1zM134 158h1v1h-1zM138 158h1v1h-1zM142 158h1v1h-1zM146 158h1v1h-1zM150 158h1v1h-1zM154 158h1v1h-1zM158 158h1v1h-1zM162 158h1v1h-1zM166 158h1v1h-1zM170 158h1v1h-1zM174 158h1v1h-1zM178 158h1v1h-1zM182 158h1v1h-1zM186 158h1v1h-1zM190 158h1v1h-1zM194 158h1v1h-1zM198 158h1v1h-1zM202 158h1v1h-1zM206 158h1v1h-1zM210 158h1v1h-1zM214 158h1v1h-1zM218 158h1v1h-1zM222 158h1v1h-1zM226 158h1v1h-1zM230 158h1v1h-1zM234 158h1v1h-1zM238 158h1v1h-1zM240 128h1v1h-1zM244 128h1v1h-1zM248 128h1v1h-1zM252 128h1v1h-1zM242 130h1v1h-1zM246 130h1v1h-1zM250 130h1v1h-1zM254 130h1v1h-1zM240 132h1v1h-1zM244 132h1v1h-1zM248 132h1v1h-1zM252 132h1v1h-1zM242 134h1v1h-1zM246 134h1v1h-1zM250 134h1v1h-1zM254 134h1v1h-1zM240 136h1v1h-1zM244 136h1v1h-1zM248 136h1v1h-1zM252 136h1v1h-1zM242 138h1v1h-1zM246 138h1v1h-1zM250 138h1v1h-1zM254 138h1v1h-1zM240 140h1v1h-1zM244 140h1v1h-1zM248 140h1v1h-1zM252 140h1v1h-1zM242 142h1v1h-1zM246 142h1v1h-1zM250 142h1v1h-1zM254 142h1v1h-1z"/>
<path fill="#8c5c2a" d="M64 112h16v1h-16z"/>
<path fill="#d0a05e" d="M64 96h16v16h-16z"/>
<path fill="#5a3414" d="M65 100h14v11h-14z"/>
<path fill="#7ab8f4" d="M67 104h10v5h-10z"/>
<path fill="#c8e4fc" d="M68 105h5v2h-5z"/>
<path fill="#333" d="M68 97h3v1h-3zM74 97h3v1h-3zM70 98h5v1h-5z"/>
<path fill="#2838a0" d="M71 99h3v2h-3z"/>
<path fill="#3a2008" d="M66 111h12v1h-12z"/>
<path fill="#5a3010" d="M81 90h14v1h-14z"/>
<path fill="#d0a878" d="M81 91h14v2h-14z"/>
<path fill="#5a3010" d="M81 93h14v1h-14zM82 94h2v3h-2zM92 94h2v3h-2zM85 94h6v1h-6z"/>
<path fill="#d01020" d="M81 86h4v4h-4z"/>
<path fill="#f08a10" d="M86 86h5v4h-5z"/>
<path fill="#2828b8" d="M92 86h3v4h-3z"/>
<path fill="#5a3818" d="M116 80h8v15h-8zM114 82h12v11h-12zM113 84h14v7h-14z"/>
<path fill="#efe6cc" d="M117 83h6v9h-6zM116 84h8v7h-8zM115 85h10v5h-10z"/>
<path fill="#444" d="M119 85h1v4h-1zM119 88h3v1h-3z"/>
<path fill="#e8e8f0" d="M151 82h2v11h-2zM147 84h2v5h-2zM155 84h2v5h-2z"/>
<path fill="#c0c0cc" d="M147 88h10v1h-10zM149 93h6v1h-6z"/>
<path fill="#fff" d="M151 81h2v2h-2z"/>
<path fill="#e8e8f0" d="M183 82h2v11h-2zM179 84h2v5h-2zM187 84h2v5h-2z"/>
<path fill="#c0c0cc" d="M179 88h10v1h-10zM181 93h6v1h-6z"/>
<path fill="#fff" d="M183 81h2v2h-2z"/>
<path fill="#4a2408" d="M144 96h15v24h-15z"/>
<path fill="#c49a68" d="M145 97h13v4h-13z"/>
<path fill="#8c6030" d="M145 101h13v18h-13z"/>
<path fill="#3a1a06" d="M146 102h11v5h-11z"/>
<path fill="#e8d020" d="M147 103h2v4h-2z"/>
<path fill="#e01828" d="M150 103h2v4h-2z"/>
<path fill="#3858e0" d="M153 103h2v4h-2z"/>
<path fill="#48a028" d="M156 103h2v4h-2z"/>
<path fill="#3a1a06" d="M146 108h11v5h-11z"/>
<path fill="#38a028" d="M147 109h2v4h-2z"/>
<path fill="#3868e8" d="M150 109h2v4h-2z"/>
<path fill="#a028c0" d="M153 109h2v4h-2z"/>
<path fill="#3a1a06" d="M146 114h11v5h-11z"/>
<path fill="#c028c0" d="M147 115h2v4h-2z"/>
<path fill="#e01828" d="M150 115h2v4h-2z"/>
<path fill="#e8d020" d="M153 115h2v4h-2z"/>
<path fill="#4a2408" d="M160 96h15v24h-15z"/>
<path fill="#c49a68" d="M161 97h13v4h-13z"/>
<path fill="#8c6030" d="M161 101h13v18h-13z"/>
<path fill="#3a1a06" d="M162 102h11v3h-11zM162 106h11v3h-11zM162 110h11v3h-11z"/>
<path fill="#5a3010" d="M162 114h11v4h-11z"/>
<path fill="#8b6030" d="M163 115h9v2h-9z"/>
<path fill="#f0e0c0" d="M167 115h2v2h-2z"/>
<path fill="#4a2408" d="M176 96h15v24h-15z"/>
<path fill="#c49a68" d="M177 97h13v4h-13z"/>
<path fill="#8c6030" d="M177 101h13v18h-13z"/>
<path fill="#4a2408" d="M178 102h11v11h-11z"/>
<path fill="#b08850" d="M179 103h4v9h-4zM184 103h4v9h-4z"/>
<path fill="#f0e0c0" d="M182 107h1v2h-1zM184 107h1v2h-1z"/>
<path fill="#4a2408" d="M178 114h11v5h-11z"/>
<path fill="#b08850" d="M179 115h9v3h-9z"/>
<path fill="#4a2408" d="M182 116h3v1h-3zM192 96h15v24h-15z"/>
<path fill="#c49a68" d="M193 97h13v4h-13z"/>
<path fill="#8c6030" d="M193 101h13v18h-13z"/>
<path fill="#3a1a06" d="M194 102h11v5h-11z"/>
<path fill="#e8d020" d="M195 103h2v4h-2z"/>
<path fill="#e01828" d="M198 103h2v4h-2z"/>
<path fill="#3858e0" d="M201 103h2v4h-2z"/>
<path fill="#48a028" d="M204 103h2v4h-2z"/>
<path fill="#3a1a06" d="M194 108h11v5h-11z"/>
<path fill="#38a028" d="M195 109h2v4h-2z"/>
<path fill="#3868e8" d="M198 109h2v4h-2z"/>
<path fill="#a028c0" d="M201 109h2v4h-2z"/>
<path fill="#3a1a06" d="M194 114h11v5h-11z"/>
<path fill="#c028c0" d="M195 115h2v4h-2z"/>
<path fill="#e01828" d="M198 115h2v4h-2z"/>
<path fill="#e8d020" d="M201 115h2v4h-2z"/>
<path fill="#4a2408" d="M208 96h15v24h-15z"/>
<path fill="#c49a68" d="M209 97h13v4h-13z"/>
<path fill="#8c6030" d="M209 101h13v18h-13z"/>
<path fill="#3a1a06" d="M210 102h11v3h-11zM210 106h11v3h-11zM210 110h11v3h-11z"/>
<path fill="#5a3010" d="M210 114h11v4h-11z"/>
<path fill="#8b6030" d="M211 115h9v2h-9z"/>
<path fill="#f0e0c0" d="M215 115h2v2h-2z"/>
<path fill="#4a2408" d="M224 96h15v24h-15z"/>
<path fill="#c49a68" d="M225 97h13v4h-13z"/>
<path fill="#8c6030" d="M225 101h13v18h-13z"/>
<path fill="#4a2408" d="M226 102h11v11h-11z"/>
<path fill="#b08850" d="M227 103h4v9h-4zM232 103h4v9h-4z"/>
<path fill="#f0e0c0" d="M230 107h1v2h-1zM232 107h1v2h-1z"/>
<path fill="#4a2408" d="M226 114h11v5h-11z"/>
<path fill="#b08850" d="M227 115h9v3h-9z"/>
<path fill="#4a2408" d="M230 116h3v1h-3z"/>
<path fill="#1b6a1b" d="M104 106h32v6h-32z"/>
<path fill="#2c8f2c" d="M105 107h30v5h-30z"/>
<path fill="#1b6a1b" d="M97 111h46v14h-46z"/>
<path fill="#2c8f2c" d="M98 112h44v12h-44z"/>
<path fill="#3aa83a" d="M104 113h32v3h-32z"/>
<path fill="#1b6a1b" d="M104 117h32v1h-32zM104 121h32v1h-32zM103 112h1v12h-1zM136 112h1v12h-1zM119 107h1v14h-1z"/>
<path fill="#4a2408" d="M66 134h11v2h-11zM65 135h13v3h-13z"/>
<path fill="#a8c8f0" d="M65 137h13v16h-13z"/>
<path fill="#fff" d="M66 138h11v7h-11z"/>
<path fill="#dce8f8" d="M66 146h11v7h-11z"/>
<path fill="#8b5a2b" d="M65 153h13v6h-13z"/>
<path fill="#4a2408" d="M65 153h13v1h-13zM67 156h1v2h-1zM70 156h1v2h-1zM73 156h1v2h-1zM76 156h1v2h-1zM98 134h11v2h-11zM97 135h13v3h-13z"/>
<path fill="#a8c8f0" d="M97 137h13v16h-13z"/>
<path fill="#fff" d="M98 138h11v7h-11z"/>
<path fill="#dce8f8" d="M98 146h11v7h-11z"/>
<path fill="#8b5a2b" d="M97 153h13v6h-13z"/>
<path fill="#4a2408" d="M97 153h13v1h-13zM99 156h1v2h-1zM102 156h1v2h-1zM105 156h1v2h-1zM108 156h1v2h-1zM130 134h11v2h-11zM129 135h13v3h-13z"/>
<path fill="#a8c8f0" d="M129 137h13v16h-13z"/>
<path fill="#fff" d="M130 138h11v7h-11z"/>
<path fill="#dce8f8" d="M130 146h11v7h-11z"/>
<path fill="#8b5a2b" d="M129 153h13v6h-13z"/>
<path fill="#4a2408" d="M129 153h13v1h-13zM131 156h1v2h-1zM134 156h1v2h-1zM137 156h1v2h-1zM140 156h1v2h-1zM162 134h11v2h-11zM161 135h13v3h-13z"/>
<path fill="#a8c8f0" d="M161 137h13v16h-13z"/>
<path fill="#fff" d="M162 138h11v7h-11z"/>
<path fill="#dce8f8" d="M162 146h11v7h-11z"/>
<path fill="#8b5a2b" d="M161 153h13v6h-13z"/>
<path fill="#4a2408" d="M161 153h13v1h-13zM163 156h1v2h-1zM166 156h1v2h-1zM169 156h1v2h-1zM172 156h1v2h-1z"/>
<path fill="#000" d="M15 0h1v240h-1zM31 0h1v240h-1zM47 0h1v240h-1zM63 0h1v240h-1zM79 0h1v240h-1zM95 0h1v240h-1zM111 0h1v240h-1zM127 0h1v240h-1zM143 0h1v240h-1zM159 0h1v240h-1zM175 0h1v240h-1zM191 0h1v240h-1zM207 0h1v240h-1zM223 0h1v240h-1zM239 0h1v240h-1zM255 0h1v240h-1zM271 0h1v240h-1zM287 0h1v240h-1zM303 0h1v240h-1zM319 0h1v240h-1zM0 15h320v1h-320zM0 31h320v1h-320zM0 47h320v1h-320zM0 63h320v1h-320zM0 79h320v1h-320zM0 95h320v1h-320zM0 111h320v1h-320zM0 127h320v1h-320zM0 143h320v1h-320zM0 159h320v1h-320zM0 175h320v1h-320zM0 191h320v1h-320zM0 207h320v1h-320zM0 223h320v1h-320zM0 239h320v1h-320z"/>
<path fill="#fff" d="M1 1h13v13h-13z"/>
<path fill="#ff648a" d="M2 2h11v11h-11z"/>
<path fill="#fff" d="M17 1h13v13h-13z"/>
<path fill="#ff648a" d="M18 2h11v11h-11z"/>
<path fill="#fff" d="M49 1h13v13h-13z"/>
<path fill="#ff648a" d="M50 2h11v11h-11z"/>
<path fill="#fff" d="M81 1h13v13h-13z"/>
<path fill="#ff648a" d="M82 2h11v11h-11z"/>
<path fill="#fff" d="M97 1h13v13h-13z"/>
<path fill="#ff648a" d="M98 2h11v11h-11z"/>
<path fill="#fff" d="M145 1h13v13h-13z"/>
<path fill="#ff648a" d="M146 2h11v11h-11z"/>
<path fill="#fff" d="M209 1h13v13h-13z"/>
<path fill="#ff648a" d="M210 2h11v11h-11z"/>
<path fill="#fff" d="M273 1h13v13h-13z"/>
<path fill="#ff648a" d="M274 2h11v11h-11z"/>
<path fill="#fff" d="M1 17h13v13h-13z"/>
<path fill="#ff648a" d="M2 18h11v11h-11z"/>
<path fill="#fff" d="M49 17h13v13h-13z"/>
<path fill="#ff648a" d="M50 18h11v11h-11z"/>
<path fill="#fff" d="M81 17h13v13h-13z"/>
<path fill="#ff648a" d="M82 18h11v11h-11z"/>
<path fill="#fff" d="M129 17h13v13h-13z"/>
<path fill="#ff648a" d="M130 18h11v11h-11z"/>
<path fill="#fff" d="M161 17h13v13h-13z"/>
<path fill="#ff648a" d="M162 18h11v11h-11z"/>
<path fill="#fff" d="M193 17h13v13h-13z"/>
<path fill="#ff648a" d="M194 18h11v11h-11z"/>
<path fill="#fff" d="M225 17h13v13h-13z"/>
<path fill="#ff648a" d="M226 18h11v11h-11z"/>
<path fill="#fff" d="M257 17h13v13h-13z"/>
<path fill="#ff648a" d="M258 18h11v11h-11z"/>
<path fill="#fff" d="M289 17h13v13h-13z"/>
<path fill="#ff648a" d="M290 18h11v11h-11z"/>
<path fill="#fff" d="M1 33h13v13h-13z"/>
<path fill="#ff648a" d="M2 34h11v11h-11z"/>
<path fill="#fff" d="M49 33h13v13h-13z"/>
<path fill="#ff648a" d="M50 34h11v11h-11z"/>
<path fill="#fff" d="M81 33h13v13h-13z"/>
<path fill="#ff648a" d="M82 34h11v11h-11z"/>
<path fill="#fff" d="M129 33h13v13h-13z"/>
<path fill="#ff648a" d="M130 34h11v11h-11z"/>
<path fill="#fff" d="M145 33h13v13h-13z"/>
<path fill="#ff648a" d="M146 34h11v11h-11z"/>
<path fill="#fff" d="M161 33h13v13h-13z"/>
<path fill="#ff648a" d="M162 34h11v11h-11z"/>
<path fill="#fff" d="M193 33h13v13h-13z"/>
<path fill="#ff648a" d="M194 34h11v11h-11z"/>
<path fill="#fff" d="M209 33h13v13h-13z"/>
<path fill="#ff648a" d="M210 34h11v11h-11z"/>
<path fill="#fff" d="M225 33h13v13h-13z"/>
<path fill="#ff648a" d="M226 34h11v11h-11z"/>
<path fill="#fff" d="M257 33h13v13h-13z"/>
<path fill="#ff648a" d="M258 34h11v11h-11z"/>
<path fill="#fff" d="M273 33h13v13h-13z"/>
<path fill="#ff648a" d="M274 34h11v11h-11z"/>
<path fill="#fff" d="M289 33h13v13h-13z"/>
<path fill="#ff648a" d="M290 34h11v11h-11z"/>
<path fill="#fff" d="M1 49h13v13h-13z"/>
<path fill="#ff648a" d="M2 50h11v11h-11z"/>
<path fill="#fff" d="M17 49h13v13h-13z"/>
<path fill="#ff648a" d="M18 50h11v11h-11z"/>
<path fill="#fff" d="M49 49h13v13h-13z"/>
<path fill="#ff648a" d="M50 50h11v11h-11z"/>
<path fill="#fff" d="M81 49h13v13h-13z"/>
<path fill="#ff648a" d="M82 50h11v11h-11z"/>
<path fill="#fff" d="M97 49h13v13h-13z"/>
<path fill="#ff648a" d="M98 50h11v11h-11z"/>
<path fill="#fff" d="M129 49h13v13h-13z"/>
<path fill="#ff648a" d="M130 50h11v11h-11z"/>
<path fill="#fff" d="M161 49h13v13h-13z"/>
<path fill="#ff648a" d="M162 50h11v11h-11z"/>
<path fill="#fff" d="M193 49h13v13h-13z"/>
<path fill="#ff648a" d="M194 50h11v11h-11z"/>
<path fill="#fff" d="M225 49h13v13h-13z"/>
<path fill="#ff648a" d="M226 50h11v11h-11z"/>
<path fill="#fff" d="M257 49h13v13h-13z"/>
<path fill="#ff648a" d="M258 50h11v11h-11z"/>
<path fill="#fff" d="M289 49h13v13h-13z"/>
<path fill="#ff648a" d="M290 50h11v11h-11z"/>
<path fill="#fff" d="M49 97h13v13h-13z"/>
<path fill="#ff648a" d="M50 98h11v11h-11z"/>
<path fill="#fff" d="M241 97h13v13h-13z"/>
<path fill="#ff648a" d="M242 98h11v11h-11z"/>
<path fill="#fff" d="M49 113h13v13h-13z"/>
<path fill="#ff648a" d="M50 114h11v11h-11z"/>
<path fill="#fff" d="M241 113h13v13h-13z"/>
<path fill="#ff648a" d="M242 114h11v11h-11z"/>
<path fill="#fff" d="M49 129h13v13h-13z"/>
<path fill="#ff648a" d="M50 130h11v11h-11z"/>
<path fill="#fff" d="M257 129h13v13h-13z"/>
<path fill="#ff648a" d="M258 130h11v11h-11z"/>
<path fill="#fff" d="M49 145h13v13h-13z"/>
<path fill="#ff648a" d="M50 146h11v11h-11z"/>
<path fill="#fff" d="M257 145h13v13h-13z"/>
<path fill="#ff648a" d="M258 146h11v11h-11z"/>
<path fill="#fff" d="M65 161h13v13h-13z"/>
<path fill="#ff648a" d="M66 162h11v11h-11z"/>
<path fill="#fff" d="M97 161h13v13h-13z"/>
<path fill="#ff648a" d="M98 162h11v11h-11z"/>
<path fill="#fff" d="M129 161h13v13h-13z"/>
<path fill="#ff648a" d="M130 162h11v11h-11z"/>
<path fill="#fff" d="M161 161h13v13h-13z"/>
<path fill="#ff648a" d="M162 162h11v11h-11z"/>
<path fill="#fff" d="M241 161h13v13h-13z"/>
<path fill="#ff648a" d="M242 162h11v11h-11z"/>
<path fill="#fff" d="M81 177h13v13h-13z"/>
<path fill="#ff648a" d="M82 178h11v11h-11z"/>
<path fill="#fff" d="M113 177h13v13h-13z"/>
<path fill="#ff648a" d="M114 178h11v11h-11z"/>
<path fill="#fff" d="M145 177h13v13h-13z"/>
<path fill="#ff648a" d="M146 178h11v11h-11z"/>
<path fill="#fff" d="M177 177h13v13h-13z"/>
<path fill="#ff648a" d="M178 178h11v11h-11z"/>
<path fill="#fff" d="M193 177h13v13h-13z"/>
<path fill="#ff648a" d="M194 178h11v11h-11z"/>
<path fill="#fff" d="M209 177h13v13h-13z"/>
<path fill="#ff648a" d="M210 178h11v11h-11z"/>
<path fill="#fff" d="M225 177h13v13h-13z"/>
<path fill="#ff648a" d="M226 178h11v11h-11z"/>
<path fill="#fff" d="M97 145h13v13h-13z"/>
<path fill="#d3a86c" d="M98 146h11v11h-11z"/>
<path fill="#2848d8" d="M99 146h10v6h-10z"/>
<path fill="#4a78f0" d="M101 147h6v3h-6z"/>
<path fill="#2848d8" d="M98 149h3v5h-3zM107 149h3v5h-3z"/>
<path fill="#f8d0a0" d="M101 151h6v4h-6z"/>
<path fill="#222" d="M102 152h1v1h-1zM105 152h1v1h-1z"/>
<path fill="#f0b020" d="M101 155h6v3h-6z"/>
<path fill="#2848d8" d="M99 155h2v3h-2zM107 155h2v3h-2z"/>
<path fill="#fff" d="M161 145h13v13h-13z"/>
<path fill="#2a6a2a" d="M162 146h11v11h-11z"/>
<path fill="#6a3010" d="M163 146h10v5h-10z"/>
<path fill="#d02020" d="M163 146h4v3h-4z"/>
<path fill="#f8e0c8" d="M164 150h8v5h-8z"/>
<path fill="#222" d="M166 151h1v2h-1zM169 151h1v2h-1z"/>
<path fill="#6a3010" d="M162 149h2v5h-2z"/>
<path fill="#fff" d="M165 154h6v2h-6z"/>
<path fill="#2a8a2a" d="M163 156h10v2h-10z"/>
<path fill="#6a3010" d="M171 148h3v6h-3z"/>
</g>
</svg>
</div>
<svg class="abs" width="1024" height="110" style="left:0;top:0">
<defs><pattern id="dith" width="2" height="2" patternUnits="userSpaceOnUse"><rect width="2" height="2" fill="#fff"/><rect width="1" height="1" fill="#e0dfe3"/><rect x="1" y="1" width="1" height="1" fill="#e0dfe3"/></pattern></defs>
<path d="M91 50v22" stroke="#9d9da1" stroke-width="1" transform="translate(.5,0)"/><path d="M92 50v22" stroke="#fff" stroke-width="1" transform="translate(.5,0)"/>
<path d="M127 50v22" stroke="#9d9da1" stroke-width="1" transform="translate(.5,0)"/><path d="M128 50v22" stroke="#fff" stroke-width="1" transform="translate(.5,0)"/>
<path d="M191 50v22" stroke="#9d9da1" stroke-width="1" transform="translate(.5,0)"/><path d="M192 50v22" stroke="#fff" stroke-width="1" transform="translate(.5,0)"/>
<path d="M283 50v22" stroke="#9d9da1" stroke-width="1" transform="translate(.5,0)"/><path d="M284 50v22" stroke="#fff" stroke-width="1" transform="translate(.5,0)"/>
<path d="M403 50v22" stroke="#9d9da1" stroke-width="1" transform="translate(.5,0)"/><path d="M404 50v22" stroke="#fff" stroke-width="1" transform="translate(.5,0)"/>
<path d="M518 50v22" stroke="#9d9da1" stroke-width="1" transform="translate(.5,0)"/><path d="M519 50v22" stroke="#fff" stroke-width="1" transform="translate(.5,0)"/>
<path d="M554 50v22" stroke="#9d9da1" stroke-width="1" transform="translate(.5,0)"/><path d="M555 50v22" stroke="#fff" stroke-width="1" transform="translate(.5,0)"/>
<path d="M618 50v22" stroke="#9d9da1" stroke-width="1" transform="translate(.5,0)"/><path d="M619 50v22" stroke="#fff" stroke-width="1" transform="translate(.5,0)"/>
<rect x="253" y="50" width="27" height="22" fill="url(#dith)"/><path d="M253 50v21M253 50h26" stroke="#86868a" fill="none" transform="translate(.5,.5)"/><path d="M279 50v21M253 71h26" stroke="#fff" fill="none" transform="translate(.5,.5)"/>
<rect x="316" y="50" width="27" height="22" fill="url(#dith)"/><path d="M316 50v21M316 50h26" stroke="#86868a" fill="none" transform="translate(.5,.5)"/><path d="M342 50v21M316 71h26" stroke="#fff" fill="none" transform="translate(.5,.5)"/>
<rect x="559" y="50" width="28" height="22" fill="url(#dith)"/><path d="M559 50v21M559 50h27" stroke="#86868a" fill="none" transform="translate(.5,.5)"/><path d="M586 50v21M559 71h27" stroke="#fff" fill="none" transform="translate(.5,.5)"/>
<rect x="587" y="50" width="28" height="22" fill="url(#dith)"/><path d="M587 50v21M587 50h27" stroke="#86868a" fill="none" transform="translate(.5,.5)"/><path d="M614 50v21M587 71h27" stroke="#fff" fill="none" transform="translate(.5,.5)"/>
<g fill="none" stroke="#fff" transform="translate(1,1)"><path d="M10.5 60.5l7-5.5h3l4 4-7 8z M17.5 55v3h3.5"/></g><g fill="none" stroke="#9a9a9e"><path d="M10.5 60.5l7-5.5h3l4 4-7 8z M17.5 55v3h3.5"/></g>
<g fill="none" stroke="#fff" transform="translate(1,1)"><path d="M45.5 53.5h7v8h-7zM41.5 63.5h10v4h-10zM39.5 66v-8h4"/></g><g fill="none" stroke="#9a9a9e"><path d="M45.5 53.5h7v8h-7zM41.5 63.5h10v4h-10zM39.5 66v-8h4M44 65.5h5"/></g>
<rect x="66.5" y="53.5" width="7" height="8" fill="#e8eefa" stroke="#111"/><path d="M66 63h2v3h3v-2l3 3-3 3v-2h-5z" fill="#111"/><g stroke="#f06a10" stroke-width="1.6"><path d="M77 58.5v9M72.5 63h9M73.8 59.8l6.4 6.4M80.2 59.8l-6.4 6.4"/></g><rect x="75.5" y="61.5" width="3" height="3" fill="#ffe060"/>
<path d="M102 53h12l2 2v12h-14z" fill="#111"/><rect x="103.5" y="54.5" width="11" height="11.500" fill="#77777c"/><rect x="106" y="54" width="5" height="4.500" fill="#f4f4f4"/><rect x="109" y="54.500" width="1.500" height="3" fill="#333"/><rect x="105" y="61.500" width="8" height="4" fill="#e4e070"/><rect x="105" y="63" width="8" height="1" fill="#a8a440"/>
<path d="M138.5 53.5h4l1 1.500h4v7h-9z" fill="#f4ec78" stroke="#111"/><path d="M149.500 57h2v3h2l-3 3-3-3h2z" fill="#111"/><rect x="142.5" y="63.5" width="11" height="4" fill="#fff" stroke="#111"/><rect x="144" y="65" width="3" height="1.500" fill="#20c8d8"/><rect x="148" y="65" width="4" height="1.500" fill="#8898a8"/>
<ellipse cx="174" cy="63" rx="5.500" ry="4.500" fill="#fff" stroke="#c81010" stroke-width="3"/><path d="M166.5 53.5h4l1 1.500h4v7h-9z" fill="#f4ec78" stroke="#111"/><path d="M167 62l3-2v4z" fill="#c81010"/>
<rect x="203" y="54" width="13" height="12" fill="#b4e6bc" stroke="#111" stroke-width="2"/><path d="M205.5 56.5h8v7h-8z" fill="none" stroke="#333" stroke-width="1"/><path d="M208.5 57.5v9l2-2 1.500 3.500 1.800-.8-1.500-3.300h3z" fill="#fff" stroke="#111" stroke-width=".9"/>
<rect x="231" y="54" width="13" height="12" fill="#9cf0f0" stroke="#111" stroke-width="2"/><path d="M233.5 56.5h8v7h-8z" fill="none" stroke="#333" stroke-width="1"/><path d="M236.5 57.5v9l2-2 1.500 3.500 1.800-.8-1.500-3.300h3z" fill="#fff" stroke="#111" stroke-width=".9"/>
<rect x="260" y="55" width="13" height="12" fill="#f0dcb8" stroke="#111" stroke-width="2"/><path d="M262.5 57.5h8v7h-8z" fill="none" stroke="#333" stroke-width="1"/><path d="M265.5 58.5v9l2-2 1.500 3.500 1.800-.8-1.500-3.300h3z" fill="#fff" stroke="#111" stroke-width=".9"/>
<text x="294" y="60.5" font-family="Liberation Serif" font-weight="bold" font-size="11.5" fill="#20106a">1</text><text x="302.5" y="68" font-family="Liberation Serif" font-weight="bold" font-size="11.5" fill="#20106a">1</text><path d="M295 66.5l11-11" stroke="#444" stroke-width="1"/>
<text x="323.5" y="61" font-family="Liberation Serif" font-weight="bold" font-size="11.5" fill="#20106a">1</text><text x="332" y="68.5" font-family="Liberation Serif" font-weight="bold" font-size="11.5" fill="#20106a">2</text><path d="M324.5 67l11-11" stroke="#444" stroke-width="1"/>
<text x="350.5" y="60.5" font-family="Liberation Serif" font-weight="bold" font-size="11.5" fill="#20106a">1</text><text x="359" y="68" font-family="Liberation Serif" font-weight="bold" font-size="11.5" fill="#20106a">4</text><path d="M351.5 66.5l11-11" stroke="#444" stroke-width="1"/>
<text x="378.5" y="60.5" font-family="Liberation Serif" font-weight="bold" font-size="11.5" fill="#20106a">1</text><text x="387" y="68" font-family="Liberation Serif" font-weight="bold" font-size="11.5" fill="#20106a">8</text><path d="M379.5 66.5l11-11" stroke="#444" stroke-width="1"/>
<rect x="414.5" y="53.5" width="14" height="13" fill="#fffef0" stroke="#111" stroke-width="1.3"/><rect x="417" y="56" width="3.500" height="1" fill="#c8a020"/><rect x="422" y="56" width="4.500" height="1" fill="#2838a0"/><rect x="417" y="58" width="3.500" height="1" fill="#c8a020"/><rect x="422" y="58" width="4.500" height="1" fill="#2838a0"/><rect x="417" y="60" width="3.500" height="1" fill="#c8a020"/><rect x="422" y="60" width="4.500" height="1" fill="#2838a0"/><rect x="417" y="62" width="3.500" height="1" fill="#806020"/><rect x="422" y="62" width="4.500" height="1" fill="#804020"/><rect x="417" y="64" width="3.500" height="1" fill="#806020"/><rect x="422" y="64" width="4.500" height="1" fill="#804020"/>
<rect x="442.5" y="54.5" width="10" height="9" fill="none" stroke="#555"/><rect x="444.5" y="56.5" width="11" height="8" fill="#f0f0f0" stroke="#222"/><rect x="446" y="58" width="3.500" height="2.500" fill="#28a848"/><rect x="450.500" y="58" width="3.500" height="2.500" fill="#f07818"/><rect x="446" y="61" width="3.500" height="2.500" fill="#2060c8"/><rect x="450.500" y="61" width="3.500" height="2.500" fill="#f0c020"/><path d="M448 53.500h3M452 66.500h5v-8" stroke="#333" fill="none"/><path d="M451 52l2 1.500-2 1.500zM451 65l-2 1.500 2 1.500z" fill="#333"/>
<path d="M474 54.500l10-1.500v3l-10 1.500z" fill="#111"/><path d="M474.5 55v10M483.500 53.500v10" stroke="#111"/><rect x="470" y="63.500" width="5" height="3.500" fill="#e8d820" stroke="#444" stroke-width=".6"/><ellipse cx="481.500" cy="64" rx="2.600" ry="2.200" fill="#8a5040"/>
<path d="M497 56.500l2-3h2.500l.5 3h1.500l.5-3h2.500l2 3 1.500 6.500c0 3-5.500 3-5.500 0v-2h-1.500v2c0 3-5.500 3-5.500 0z" fill="#111"/><path d="M497.500 61.500h3M505.500 61.500h3M498 64h2.500M506 64h2.500M499 57.500h1M506.500 57.500h1" stroke="#e8f8f8" stroke-width="1.200"/>
<path d="M532.5 54v12.500l7.500-6.250z" fill="#f8f088" stroke="#222" stroke-width="1.300" stroke-linejoin="round"/><path d="M533.500 66.500l7-6" stroke="#807020" stroke-width="1"/>
<rect x="566.5" y="54.500" width="14" height="13.500" fill="#fff" stroke="#111" stroke-width="1.500"/><path d="M569 57l9 8.500M578 57l-9 8.500" stroke="#111" stroke-width="1"/><path d="M568.500 56.500h3l-3 3zM578.500 56.500h-3l3 3zM568.500 66h3l-3-3zM578.500 66h-3l3-3z" fill="#111"/>
<rect x="595" y="54" width="13" height="8.500" fill="#e85808" stroke="#222" stroke-width="1"/><rect x="598" y="56" width="7" height="4.500" fill="#f8c020"/><rect x="600" y="57" width="3" height="2.500" fill="#fff8a0"/><path d="M596 58.250h11" stroke="#f8c020" stroke-width="1"/><text x="594.300" y="69" font-family="Liberation Sans" font-weight="bold" font-size="6.300" fill="#111" textLength="15" lengthAdjust="spacingAndGlyphs">TITLE</text>
<path d="M630 62l9-9 6 3-9 9.500z" fill="#b010b0" stroke="#50085a" stroke-width=".8"/><path d="M630 62l0 2.500 6 3.300 9-9.500v-2.300l-9 9.500z" fill="#f4f0f8" stroke="#50085a" stroke-width=".7"/><path d="M630 64.500l6 3.300" stroke="#7a0a8a" stroke-width="1.400"/><path d="M638.500 56.500c1.500-1 2.500 0 1.500 1.200l-.8.800" stroke="#f8d030" stroke-width="1.200" fill="none"/>
<path d="M35 80v22" stroke="#9d9da1" stroke-width="1" transform="translate(.5,0)"/><path d="M36 80v22" stroke="#fff" stroke-width="1" transform="translate(.5,0)"/>
<g fill="none" stroke="#fff" transform="translate(1,1)"><path d="M12.500 96.500v-9h-2l3.500-3.500 3.500 3.500h-2v7h6v-6h3v8z"/></g><g fill="none" stroke="#8c8c92"><path d="M12.500 96.500v-9h-2l3.500-3.500 3.500 3.500h-2v7h6v-6h3v8z"/><rect x="21" y="89" width="3" height="7" fill="#8c8c92" stroke="none"/></g>
<g fill="none" stroke="#fff" transform="translate(1,1)"><rect x="47.500" y="84.500" width="10" height="10" stroke-dasharray="2 1.500"/></g><g fill="none" stroke="#8c8c92"><rect x="47.500" y="84.500" width="10" height="10" stroke-dasharray="2 1.500"/><path d="M55.500 91.500l5 2-2 1 2.500 2.500-1 1-2.500-2.500-1 2z" fill="#e8e8ec"/></g>
<g fill="none"><circle cx="81" cy="90.500" r="5" stroke="#fff" stroke-width="1.500"/><path d="M85 94l4 4" stroke="#fff" stroke-width="2.500"/><circle cx="80" cy="89.500" r="5" stroke="#8c8c92" stroke-width="1.500"/><path d="M84 93l3.500 3.500" stroke="#8c8c92" stroke-width="2.500"/></g>
<g><path d="M104 85l2.500-1.500 9 8.500-2 2.500z" fill="#8c8c92"/><path d="M108 89.500l3-2.500" stroke="#e8e8ec" stroke-width="1.500"/><path d="M113.500 94.500l2-2.500 2 5.500zM103 84l4 0" stroke="#8c8c92" fill="#fff"/><path d="M105 84.500l10 9" stroke="#fff" stroke-width=".8" transform="translate(1.500,-.5)"/></g>
<g fill="none"><rect x="131.500" y="84.500" width="13" height="13" stroke="#fff"/><rect x="130.500" y="83.500" width="13" height="13" stroke="#8c8c92"/><path d="M135.5 84.5v9l2-2 1.500 3.500 1.800-.8-1.500-3.300h3z" fill="#ececf0" stroke="#8c8c92" stroke-width=".9"/></g>
<g fill="none"><circle cx="166.300" cy="91.500" r="7" stroke="#fff"/><circle cx="165.300" cy="90.500" r="7" stroke="#8c8c92"/><path d="M163.5 84.5v9l2-2 1.500 3.500 1.800-.8-1.500-3.300h3z" fill="#ececf0" stroke="#8c8c92" stroke-width=".9"/></g>
<g><path d="M190.500 89l6-5.500 5.500 6-6 5.500z" fill="#d0d0d6" stroke="#8c8c92"/><path d="M193 88.500l3.500-3 3.500 3.500M192.500 91l5-4.500" stroke="#8c8c92" fill="none"/><path d="M190.500 89l-3 2.500v5l2-3.500z" fill="#8c8c92" stroke="#8c8c92" stroke-width=".8"/><path d="M193 96.500h7" stroke="#8c8c92" stroke-width="1.500"/><path d="M194 97.500h7" stroke="#fff" stroke-width="1"/></g>
</svg>
<div id="palwrap" class="abs" style="left:0;top:106px;width:213px;height:445px;border-top:2px solid #8a8a8e;border-left:2px solid #8a8a8e;background:#fff"></div>
<div id="pal" class="abs" style="left:2px;top:108px;width:192px;height:442px;background:#ff648a;overflow:hidden">
<svg width="192" height="442" style="position:absolute;left:0;top:0" shape-rendering="crispEdges">
<path fill="#000" d="M0 0h32v32h-32z"/>
<path fill="#fffde6" d="M1 1h30v30h-30z"/>
<path fill="#000" d="M3 3h26v26h-26z"/>
<path fill="#ff648a" d="M4 4h24v24h-24z"/>
<path fill="#111" d="M34 6h4v4h-4zM38 8h24v2h-24zM44 8h18v6h-18zM46 14h10v4h-10z"/>
<path fill="#ffb0c8" d="M48 14h4v2h-4z"/>
<path fill="#6a4a20" d="M54 14h6v4h-6zM56 16h6v4h-6zM58 20h4v4h-4z"/>
<path fill="#111" d="M54 18h2v2h-2zM62 18h2v4h-2zM56 20h2v2h-2zM58 22h4v2h-4z"/>
<path fill="#6b6b6f" d="M66 8h24v4h-24zM68 6h4v2h-4z"/>
<path fill="#3c3c40" d="M78 10h16v6h-16z"/>
<path fill="#6b6b6f" d="M82 6h8v4h-8z"/>
<path fill="#111" d="M90 14h6v10h-6z"/>
<path fill="#3c3c40" d="M84 16h6v2h-6zM96 6h32v4h-32z"/>
<path fill="#6b6b6f" d="M102 6h16v2h-16z"/>
<path fill="#3c3c40" d="M102 10h16v6h-16zM110 14h4v10h-4z"/>
<path fill="#6b6b6f" d="M126 8h2v8h-2z"/>
<path fill="#111" d="M136 4h18v4h-18zM142 8h4v2h-4zM130 10h28v4h-28zM138 14h6v12h-6zM152 14h6v8h-6z"/>
<path fill="#333" d="M142 16h10v2h-10z"/>
<path fill="#123c8c" d="M160 16h32v48h-32z"/>
<path fill="#a9d1f7" d="M162 18h28v44h-28z"/>
<path fill="#6fa9ee" d="M162 18h28v6h-28z"/>
<path fill="#2e63b8" d="M162 24h28v2h-28zM162 38h28v2h-28z"/>
<path fill="#c6e2fb" d="M164 28h12v8h-12zM164 42h10v18h-10z"/>
<path fill="#111" d="M184 29h2v7h-2zM184 44h2v9h-2z"/>
<path fill="#6b3d14" d="M0 40h46v4h-46z"/>
<path fill="#111" d="M18 36h6v4h-6zM44 38h20v4h-20z"/>
<path fill="#6b3d14" d="M0 42h16v6h-16z"/>
<path fill="#2a2a3a" d="M24 44h6v6h-6z"/>
<path fill="#111" d="M16 40h28v2h-28zM68 40h44v4h-44zM72 38h2v2h-2z"/>
<path fill="#8b5a2b" d="M78 42h14v4h-14z"/>
<path fill="#111" d="M88 44h4v12h-4z"/>
<path fill="#8b5a2b" d="M96 44h4v4h-4zM98 48h6v4h-6zM108 44h12v4h-12zM114 48h6v4h-6z"/>
<path fill="#111" d="M132 40h26v24h-26zM136 36h8v4h-8zM148 36h8v4h-8z"/>
<path fill="#ff648a" d="M132 54h4v10h-4zM156 54h2v10h-2z"/>
<path fill="#777" d="M136 42h6v2h-6zM148 42h6v2h-6z"/>
<path fill="#2b2b2b" d="M144 46h2v18h-2z"/>
<path fill="#111" d="M2 74h22v2h-22z"/>
<path fill="#1f7a1f" d="M16 74h44v6h-44z"/>
<path fill="#2b2b2b" d="M24 68h18v4h-18zM28 72h12v2h-12zM32 78h12v6h-12z"/>
<path fill="#1f7a1f" d="M46 76h14v8h-14z"/>
<path fill="#155a15" d="M24 76h22v2h-22z"/>
<path fill="#0c0c0c" d="M66 66h92v60h-92z"/>
<path fill="#ff648a" d="M66 66h2v2h-2zM156 66h2v2h-2zM66 124h2v2h-2zM156 124h2v2h-2z"/>
<path fill="#333436" d="M68 68h88v56h-88z"/>
<path fill="#3b3c3e" d="M68 68h88v12h-88z"/>
<path fill="#0c0c0c" d="M68 80h88v2h-88z"/>
<path fill="#5a9bf0" d="M76 84h72v32h-72z"/>
<path fill="#333436" d="M76 84h2v2h-2zM146 84h2v2h-2zM76 114h2v2h-2zM146 114h2v2h-2z"/>
<path fill="#9ccaf9" d="M90 110h16v2h-16zM92 108h16v2h-16zM94 106h16v2h-16zM96 104h16v2h-16zM98 102h16v2h-16zM100 100h16v2h-16zM102 98h16v2h-16zM104 96h16v2h-16zM106 94h16v2h-16zM108 92h16v2h-16zM110 90h16v2h-16zM112 88h16v2h-16zM114 86h16v2h-16zM116 84h16v2h-16zM118 104h6v2h-6zM120 102h6v2h-6zM122 100h6v2h-6zM124 98h6v2h-6zM126 96h6v2h-6zM128 94h6v2h-6z"/>
<path fill="#fff" d="M100 120h2v2h-2zM104 120h2v2h-2zM108 120h2v2h-2zM112 120h2v2h-2zM116 120h2v2h-2z"/>
<path fill="#a9d1f7" d="M166 86h20v10h-20z"/>
<path fill="#fff" d="M168 90h16v4h-16z"/>
<path fill="#a9d1f7" d="M172 90h8v2h-8z"/>
<path fill="#2a2a2c" d="M162 104h28v22h-28z"/>
<path fill="#47484a" d="M164 108h24v16h-24z"/>
<path fill="#e0b020" d="M164 106h4v2h-4z"/>
<path fill="#e07a10" d="M172 104h8v2h-8z"/>
<path fill="#e0b020" d="M182 106h4v2h-4z"/>
<path fill="#5a9bf0" d="M4 124h20v18h-20z"/>
<path fill="#fff" d="M8 126h14v14h-14z"/>
<path fill="#3a2a4a" d="M8 126h4v2h-4zM16 126h4v2h-4z"/>
<path fill="#7a5a6a" d="M12 128h4v6h-4z"/>
<path fill="#5a9bf0" d="M10 136h8v4h-8z"/>
<path fill="#ff648a" d="M4 124h4v2h-4zM4 126h2v2h-2zM20 124h4v2h-4zM22 126h2v2h-2zM4 138h2v4h-2zM6 140h2v2h-2zM22 138h2v4h-2zM20 140h2v2h-2z"/>
<path fill="#5a9bf0" d="M10 142h8v14h-8z"/>
<path fill="#fff" d="M12 142h4v14h-4z"/>
<path fill="#5a9bf0" d="M6 156h18v4h-18z"/>
<path fill="#fff" d="M8 156h12v2h-12z"/>
<path fill="#c9c9cd" d="M38 116h24v20h-24z"/>
<path fill="#fff" d="M40 118h20v16h-20z"/>
<path fill="#3a3a3a" d="M40 120h6v2h-6z"/>
<path fill="#c9c9cd" d="M42 138h16v16h-16z"/>
<path fill="#fff" d="M44 138h12v14h-12z"/>
<path fill="#6aa8f0" d="M46 140h8v8h-8z"/>
<path fill="#c9c9cd" d="M44 154h12v6h-12z"/>
<path fill="#fff" d="M46 154h8v4h-8z"/>
<path fill="#2f7a1f" d="M66 134h50v8h-50z"/>
<path fill="#1d5212" d="M66 132h2v12h-2zM114 132h2v12h-2z"/>
<path fill="#4c9a30" d="M70 136h44v2h-44z"/>
<path fill="#1d5212" d="M70 140h44v2h-44z"/>
<path fill="#3a3a1a" d="M82 142h8v6h-8z"/>
<path fill="#8b4a1b" d="M86 142h2v4h-2zM100 142h6v6h-6z"/>
<path fill="#4a4a3c" d="M130 134h24v4h-24zM134 138h14v2h-14z"/>
<path fill="#5a3a1c" d="M148 138h6v10h-6z"/>
<path fill="#111" d="M164 134h24v8h-24zM168 140h18v12h-18z"/>
<path fill="#ff648a" d="M164 140h4v4h-4zM186 140h2v4h-2z"/>
<path fill="#9a9a9a" d="M172 140h8v8h-8z"/>
<path fill="#3c3c40" d="M10 174h36v6h-36z"/>
<path fill="#111" d="M44 176h12v2h-12zM46 172h4v4h-4z"/>
<path fill="#3c3c40" d="M24 170h6v4h-6z"/>
<path fill="#ff648a" d="M26 172h2v2h-2z"/>
<path fill="#55555a" d="M28 178h6v8h-6z"/>
<path fill="#3c3c40" d="M10 176h10v6h-10zM18 178h6v8h-6z"/>
<path fill="#2b2b2b" d="M68 160h2v14h-2zM66 172h28v12h-28z"/>
<path fill="#6a6a6e" d="M68 174h24v8h-24z"/>
<path fill="#2b2b2b" d="M76 168h10v4h-10z"/>
<path fill="#ff648a" d="M78 170h6v2h-6z"/>
<path fill="#3a3a3e" d="M78 174h6v8h-6z"/>
<path fill="#141414" d="M118 160h52v32h-52z"/>
<path fill="#6a6a70" d="M121 162h12v12h-12z"/>
<path fill="#141414" d="M121 162h2v2h-2zM131 162h2v2h-2zM121 172h2v2h-2zM131 172h2v2h-2z"/>
<path fill="#55555b" d="M125 166h4v4h-4z"/>
<path fill="#6a6a70" d="M156 162h12v12h-12z"/>
<path fill="#141414" d="M156 162h2v2h-2zM166 162h2v2h-2zM156 172h2v2h-2zM166 172h2v2h-2z"/>
<path fill="#55555b" d="M160 166h4v4h-4z"/>
<path fill="#6a6a70" d="M121 178h12v12h-12z"/>
<path fill="#141414" d="M121 178h2v2h-2zM131 178h2v2h-2zM121 188h2v2h-2zM131 188h2v2h-2z"/>
<path fill="#55555b" d="M125 182h4v4h-4z"/>
<path fill="#6a6a70" d="M156 178h12v12h-12z"/>
<path fill="#141414" d="M156 178h2v2h-2zM166 178h2v2h-2zM156 188h2v2h-2zM166 188h2v2h-2z"/>
<path fill="#55555b" d="M160 182h4v4h-4z"/>
<path fill="#6a6a70" d="M134 162h20v4h-20z"/>
<path fill="#26262a" d="M136 168h16v10h-16z"/>
<path fill="#3a8af0" d="M140 168h6v2h-6zM140 172h6v2h-6z"/>
<path fill="#4a4a50" d="M136 182h16v4h-16z"/>
<path fill="#2c2c30" d="M134 188h20v2h-20z"/>
<path fill="#0c0c0c" d="M2 196h92v60h-92z"/>
<path fill="#ff648a" d="M2 196h2v2h-2zM92 196h2v2h-2zM2 254h2v2h-2zM92 254h2v2h-2z"/>
<path fill="#343537" d="M4 198h88v56h-88z"/>
<path fill="#3a3b3d" d="M4 198h88v12h-88z"/>
<path fill="#0c0c0c" d="M4 210h88v2h-88zM8 228h20v22h-20z"/>
<path fill="#343537" d="M10 230h16v18h-16z"/>
<path fill="#0c0c0c" d="M8 232h20v2h-20zM70 228h20v22h-20z"/>
<path fill="#343537" d="M72 230h16v18h-16z"/>
<path fill="#0c0c0c" d="M70 232h20v2h-20zM46 216h2v2h-2zM48 216h2v2h-2zM40 218h2v2h-2zM42 218h2v2h-2zM44 218h2v2h-2zM46 218h2v2h-2zM48 218h2v2h-2zM50 218h2v2h-2zM52 218h2v2h-2zM54 218h2v2h-2zM38 220h2v2h-2zM40 220h2v2h-2zM54 220h2v2h-2zM56 220h2v2h-2zM36 222h2v2h-2zM38 222h2v2h-2zM56 222h2v2h-2zM58 222h2v2h-2zM36 224h2v2h-2zM58 224h2v2h-2zM36 226h2v2h-2zM58 226h2v2h-2zM34 228h2v2h-2zM36 228h2v2h-2zM58 228h2v2h-2zM60 228h2v2h-2zM34 230h2v2h-2zM36 230h2v2h-2zM58 230h2v2h-2zM60 230h2v2h-2zM36 232h2v2h-2zM58 232h2v2h-2zM36 234h2v2h-2zM58 234h2v2h-2zM36 236h2v2h-2zM38 236h2v2h-2zM56 236h2v2h-2zM58 236h2v2h-2zM38 238h2v2h-2zM40 238h2v2h-2zM54 238h2v2h-2zM56 238h2v2h-2zM40 240h2v2h-2zM42 240h2v2h-2zM44 240h2v2h-2zM46 240h2v2h-2zM48 240h2v2h-2zM50 240h2v2h-2zM52 240h2v2h-2zM54 240h2v2h-2zM46 242h2v2h-2zM48 242h2v2h-2zM38 224h20v2h-20z"/>
<path fill="#3c3c40" d="M96 206h32v2h-32zM104 204h20v8h-20zM114 212h6v8h-6zM102 212h6v4h-6zM96 204h2v6h-2z"/>
<path fill="#6b3d14" d="M98 224h28v20h-28z"/>
<path fill="#d0a878" d="M100 226h24v16h-24z"/>
<path fill="#e02828" d="M100 226h10v4h-10z"/>
<path fill="#f0d8b0" d="M100 230h10v2h-10z"/>
<path fill="#e02828" d="M100 232h10v4h-10z"/>
<path fill="#f0d8b0" d="M100 236h10v2h-10z"/>
<path fill="#e02828" d="M100 238h10v4h-10z"/>
<path fill="#fff" d="M112 228h12v14h-12z"/>
<path fill="#4a8af0" d="M116 228h8v6h-8z"/>
<path fill="#222" d="M114 234h2v2h-2zM118 238h4v4h-4z"/>
<path fill="#6b3d14" d="M98 244h2v12h-2zM124 244h2v12h-2z"/>
<path fill="#5a3010" d="M128 198h64v58h-64zM130 196h28v2h-28zM162 196h28v2h-28z"/>
<path fill="#b07838" d="M130 198h28v3h-28zM162 198h28v3h-28z"/>
<path fill="#8b5a2b" d="M158 200h4v10h-4z"/>
<path fill="#ff648a" d="M132 201h26v4h-26zM162 201h26v4h-26z"/>
<path fill="#e8102c" d="M130 204h60v50h-60z"/>
<path fill="#a8c8f0" d="M132 204h26v16h-26z"/>
<path fill="#ffffff" d="M135 204h20v13h-20z"/>
<path fill="#dcecfb" d="M134 216h22v3h-22z"/>
<path fill="#e8102c" d="M132 218h2v2h-2zM156 218h2v2h-2z"/>
<path fill="#ff648a" d="M132 202h2v4h-2zM156 202h2v4h-2z"/>
<path fill="#ffffff" d="M136 202h18v2h-18z"/>
<path fill="#a8c8f0" d="M162 204h26v16h-26z"/>
<path fill="#ffffff" d="M165 204h20v13h-20z"/>
<path fill="#dcecfb" d="M164 216h22v3h-22z"/>
<path fill="#e8102c" d="M162 218h2v2h-2zM186 218h2v2h-2z"/>
<path fill="#ff648a" d="M162 202h2v4h-2zM186 202h2v4h-2z"/>
<path fill="#ffffff" d="M166 202h18v2h-18z"/>
<path fill="#d01028" d="M158 210h4v12h-4z"/>
<path fill="#c40c24" d="M134 226h24v20h-24zM162 226h24v20h-24z"/>
<path fill="#f0203c" d="M136 228h20v4h-20zM164 228h20v4h-20z"/>
<path fill="#9a0818" d="M130 248h60v8h-60z"/>
<path fill="#e8102c" d="M132 246h4v6h-4zM140 246h4v6h-4zM148 246h4v6h-4zM156 246h4v6h-4zM164 246h4v6h-4zM172 246h4v6h-4zM180 246h4v6h-4zM188 246h4v6h-4z"/>
<path fill="#e87810" d="M6 270h20v6h-20z"/>
<path fill="#f8c050" d="M8 270h16v2h-16z"/>
<path fill="#e87810" d="M10 276h12v6h-12z"/>
<path fill="#ff648a" d="M6 276h4v2h-4zM22 276h4v2h-4z"/>
<path fill="#5a3010" d="M32 270h32v10h-32z"/>
<path fill="#d0a878" d="M34 272h28v6h-28z"/>
<path fill="#5a3010" d="M34 280h6v6h-6zM56 280h6v6h-6z"/>
<path fill="#ff648a" d="M36 282h2v4h-2zM58 282h2v4h-2z"/>
<path fill="#d01020" d="M36 264h6v8h-6z"/>
<path fill="#f08a10" d="M46 264h8v8h-8z"/>
<path fill="#1838c8" d="M56 264h8v10h-8z"/>
<path fill="#fff" d="M64 256h32v32h-32z"/>
<path fill="#e01818" d="M66 258h2v2h-2zM68 258h2v2h-2zM70 258h2v2h-2zM66 260h2v2h-2zM66 262h2v2h-2zM66 264h2v2h-2zM68 264h2v2h-2zM70 264h2v2h-2zM66 268h2v2h-2zM70 268h2v2h-2zM66 270h2v2h-2zM70 270h2v2h-2zM66 272h2v2h-2zM70 272h2v2h-2zM66 274h2v2h-2zM68 274h2v2h-2zM70 274h2v2h-2zM66 278h2v2h-2zM68 278h2v2h-2zM70 278h2v2h-2zM76 278h2v2h-2zM82 278h2v2h-2zM86 278h2v2h-2zM88 278h2v2h-2zM90 278h2v2h-2zM92 278h2v2h-2zM66 280h2v2h-2zM72 280h2v2h-2zM76 280h2v2h-2zM82 280h2v2h-2zM86 280h2v2h-2zM88 280h2v2h-2zM66 282h2v2h-2zM68 282h2v2h-2zM70 282h2v2h-2zM76 282h2v2h-2zM82 282h2v2h-2zM86 282h2v2h-2zM66 284h2v2h-2zM72 284h2v2h-2zM78 284h2v2h-2zM80 284h2v2h-2zM86 284h2v2h-2zM88 284h2v2h-2zM90 284h2v2h-2zM92 284h2v2h-2zM81 257h1v1h-1zM82 257h1v1h-1zM83 257h1v1h-1zM84 257h1v1h-1zM85 257h1v1h-1zM86 257h1v1h-1zM87 257h1v1h-1zM88 257h1v1h-1zM79 258h1v1h-1zM80 258h1v1h-1zM81 258h1v1h-1zM82 258h1v1h-1zM83 258h1v1h-1zM84 258h1v1h-1zM85 258h1v1h-1zM86 258h1v1h-1zM87 258h1v1h-1zM88 258h1v1h-1zM89 258h1v1h-1zM90 258h1v1h-1zM78 259h1v1h-1zM79 259h1v1h-1zM80 259h1v1h-1zM81 259h1v1h-1zM88 259h1v1h-1zM89 259h1v1h-1zM90 259h1v1h-1zM91 259h1v1h-1zM77 260h1v1h-1zM78 260h1v1h-1zM79 260h1v1h-1zM90 260h1v1h-1zM91 260h1v1h-1zM92 260h1v1h-1zM76 261h1v1h-1zM77 261h1v1h-1zM78 261h1v1h-1zM91 261h1v1h-1zM92 261h1v1h-1zM93 261h1v1h-1zM76 262h1v1h-1zM77 262h1v1h-1zM92 262h1v1h-1zM93 262h1v1h-1zM75 263h1v1h-1zM76 263h1v1h-1zM77 263h1v1h-1zM92 263h1v1h-1zM93 263h1v1h-1zM94 263h1v1h-1zM75 264h1v1h-1zM76 264h1v1h-1zM93 264h1v1h-1zM94 264h1v1h-1zM75 265h1v1h-1zM76 265h1v1h-1zM93 265h1v1h-1zM94 265h1v1h-1zM75 266h1v1h-1zM76 266h1v1h-1zM93 266h1v1h-1zM94 266h1v1h-1zM75 267h1v1h-1zM76 267h1v1h-1zM93 267h1v1h-1zM94 267h1v1h-1zM75 268h1v1h-1zM76 268h1v1h-1zM93 268h1v1h-1zM94 268h1v1h-1zM75 269h1v1h-1zM76 269h1v1h-1zM93 269h1v1h-1zM94 269h1v1h-1zM75 270h1v1h-1zM76 270h1v1h-1zM77 270h1v1h-1zM92 270h1v1h-1zM93 270h1v1h-1zM94 270h1v1h-1zM76 271h1v1h-1zM77 271h1v1h-1zM92 271h1v1h-1zM93 271h1v1h-1zM76 272h1v1h-1zM77 272h1v1h-1zM78 272h1v1h-1zM91 272h1v1h-1zM92 272h1v1h-1zM93 272h1v1h-1zM77 273h1v1h-1zM78 273h1v1h-1zM79 273h1v1h-1zM90 273h1v1h-1zM91 273h1v1h-1zM92 273h1v1h-1zM78 274h1v1h-1zM79 274h1v1h-1zM80 274h1v1h-1zM81 274h1v1h-1zM88 274h1v1h-1zM89 274h1v1h-1zM90 274h1v1h-1zM91 274h1v1h-1zM79 275h1v1h-1zM80 275h1v1h-1zM81 275h1v1h-1zM82 275h1v1h-1zM83 275h1v1h-1zM84 275h1v1h-1zM85 275h1v1h-1zM86 275h1v1h-1zM87 275h1v1h-1zM88 275h1v1h-1zM89 275h1v1h-1zM90 275h1v1h-1zM81 276h1v1h-1zM82 276h1v1h-1zM83 276h1v1h-1zM84 276h1v1h-1zM85 276h1v1h-1zM86 276h1v1h-1zM87 276h1v1h-1zM88 276h1v1h-1zM84 262h2v10h-2zM82 264h6v6h-6zM80 266h10v2h-10z"/>
<path fill="#1414d8" d="M96 256h32v32h-32z"/>
<path fill="#5a9bf0" d="M98 258h28v28h-28z"/>
<path fill="#111" d="M102 259h2v2h-2zM104 259h2v2h-2zM106 259h2v2h-2zM110 259h2v2h-2zM116 259h2v2h-2zM120 259h2v2h-2zM102 261h2v2h-2zM106 261h2v2h-2zM110 261h2v2h-2zM112 261h2v2h-2zM116 261h2v2h-2zM120 261h2v2h-2zM102 263h2v2h-2zM104 263h2v2h-2zM106 263h2v2h-2zM110 263h2v2h-2zM114 263h2v2h-2zM116 263h2v2h-2zM120 263h2v2h-2zM102 265h2v2h-2zM106 265h2v2h-2zM110 265h2v2h-2zM116 265h2v2h-2zM120 265h2v2h-2zM99 268h2v2h-2zM107 268h2v2h-2zM111 268h2v2h-2zM113 268h2v2h-2zM115 268h2v2h-2zM119 268h2v2h-2zM121 268h2v2h-2zM123 268h2v2h-2zM99 270h2v2h-2zM101 270h2v2h-2zM105 270h2v2h-2zM107 270h2v2h-2zM111 270h2v2h-2zM115 270h2v2h-2zM121 270h2v2h-2zM99 272h2v2h-2zM103 272h2v2h-2zM107 272h2v2h-2zM111 272h2v2h-2zM113 272h2v2h-2zM115 272h2v2h-2zM121 272h2v2h-2zM99 274h2v2h-2zM107 274h2v2h-2zM111 274h2v2h-2zM115 274h2v2h-2zM121 274h2v2h-2z"/>
<path fill="#d01040" d="M108 276h2v2h-2zM110 276h2v2h-2zM112 276h2v2h-2zM114 276h2v2h-2zM108 278h2v2h-2zM108 280h2v2h-2zM110 280h2v2h-2zM112 280h2v2h-2zM108 282h2v2h-2zM108 284h2v2h-2zM110 284h2v2h-2zM112 284h2v2h-2zM114 284h2v2h-2z"/>
<path fill="#151515" d="M148 262h4v10h-4zM146 266h8v6h-8zM138 272h16v4h-16zM144 276h4v6h-4zM140 282h12v3h-12zM138 292h4v10h-4zM136 296h8v6h-8zM136 302h16v4h-16zM142 306h4v6h-4zM138 312h12v3h-12zM169 260h14v6h-14z"/>
<path fill="#55555a" d="M171 261h10v3h-10z"/>
<path fill="#151515" d="M174 266h4v3h-4zM168 269h16v6h-16z"/>
<path fill="#55555a" d="M170 270h12v3h-12z"/>
<path fill="#151515" d="M174 275h4v4h-4zM170 279h12v4h-12z"/>
<path fill="#ff648a" d="M174 281h4v2h-4z"/>
<path fill="#151515" d="M169 291h14v6h-14z"/>
<path fill="#55555a" d="M171 292h10v3h-10z"/>
<path fill="#151515" d="M174 297h4v3h-4zM168 300h16v6h-16z"/>
<path fill="#55555a" d="M170 301h12v3h-12z"/>
<path fill="#151515" d="M174 306h4v4h-4zM170 310h12v4h-12z"/>
<path fill="#ff648a" d="M174 312h4v2h-4z"/>
<path fill="#4a2a14" d="M4 294h24v22h-24z"/>
<path fill="#e8e0d0" d="M6 296h20v18h-20z"/>
<path fill="#3a3a3e" d="M8 298h8v6h-8zM18 298h6v6h-6zM8 306h8v6h-8zM18 306h6v6h-6z"/>
<path fill="#5a3010" d="M36 296h24v24h-24z"/>
<path fill="#a87838" d="M38 298h20v20h-20z"/>
<path fill="#2a2a3a" d="M40 300h6v6h-6zM50 300h6v6h-6zM40 310h6v6h-6zM50 310h6v6h-6z"/>
<path fill="#5a3010" d="M64 296h32v24h-32z"/>
<path fill="#a87838" d="M66 298h28v22h-28z"/>
<path fill="#2a1408" d="M70 298h20v22h-20z"/>
<path fill="#e8f0ff" d="M72 298h6v20h-6zM82 298h6v20h-6z"/>
<path fill="#6b3d14" d="M76 312h10v8h-10z"/>
<path fill="#3a1e08" d="M100 288h24v32h-24z"/>
<path fill="#6b4a20" d="M102 290h20v10h-20z"/>
<path fill="#55361a" d="M102 302h20v16h-20z"/>
<path fill="#f0d020" d="M110 304h4v2h-4zM110 310h4v2h-4zM110 316h4v2h-4z"/>
<path fill="#3a1e08" d="M2 322h28v28h-28z"/>
<path fill="#8b5a2b" d="M4 324h24v24h-24z"/>
<path fill="#3a1e08" d="M6 326h20v20h-20z"/>
<path fill="#5a9bf0" d="M8 328h16v8h-16z"/>
<path fill="#fff" d="M8 330h8v4h-8z"/>
<path fill="#3a9a2a" d="M8 336h16v6h-16z"/>
<path fill="#7ac040" d="M14 334h10v4h-10z"/>
<path fill="#8b6a3a" d="M8 342h16v2h-16z"/>
<path fill="#3a1e08" d="M34 322h28v28h-28z"/>
<path fill="#8b5a2b" d="M36 324h24v24h-24z"/>
<path fill="#3a1e08" d="M38 326h20v20h-20z"/>
<path fill="#5a28b8" d="M40 328h16v16h-16z"/>
<path fill="#f09030" d="M46 330h6v8h-6z"/>
<path fill="#c040d0" d="M42 338h14v4h-14z"/>
<path fill="#f8c060" d="M46 328h4v4h-4z"/>
<path fill="#3a1e08" d="M66 322h28v28h-28z"/>
<path fill="#8b5a2b" d="M68 324h24v24h-24z"/>
<path fill="#3a1e08" d="M70 326h20v20h-20z"/>
<path fill="#58b030" d="M72 328h16v16h-16z"/>
<path fill="#f0a020" d="M72 340h16v4h-16z"/>
<path fill="#e02030" d="M76 330h10v8h-10z"/>
<path fill="#3040d0" d="M72 334h6v6h-6z"/>
<path fill="#e02030" d="M80 336h6v6h-6z"/>
<path fill="#c01020" d="M106 320h44v28h-44z"/>
<path fill="#fff" d="M108 322h40v24h-40z"/>
<path fill="#101070" d="M111 324h2v2h-2zM119 324h2v2h-2zM123 324h2v2h-2zM127 324h2v2h-2zM131 324h2v2h-2zM135 324h2v2h-2zM139 324h2v2h-2zM111 326h2v2h-2zM113 326h2v2h-2zM117 326h2v2h-2zM119 326h2v2h-2zM123 326h2v2h-2zM129 326h2v2h-2zM137 326h2v2h-2zM111 328h2v2h-2zM115 328h2v2h-2zM119 328h2v2h-2zM123 328h2v2h-2zM127 328h2v2h-2zM131 328h2v2h-2zM135 328h2v2h-2zM139 328h2v2h-2z"/>
<path fill="#1a7a1a" d="M110 332h2v2h-2zM112 332h2v2h-2zM114 332h2v2h-2zM118 332h2v2h-2zM120 332h2v2h-2zM122 332h2v2h-2zM126 332h2v2h-2zM128 332h2v2h-2zM130 332h2v2h-2zM134 332h2v2h-2zM136 332h2v2h-2zM138 332h2v2h-2zM142 332h2v2h-2zM146 332h2v2h-2zM110 334h2v2h-2zM118 334h2v2h-2zM126 334h2v2h-2zM136 334h2v2h-2zM142 334h2v2h-2zM146 334h2v2h-2zM110 336h2v2h-2zM112 336h2v2h-2zM118 336h2v2h-2zM120 336h2v2h-2zM126 336h2v2h-2zM128 336h2v2h-2zM130 336h2v2h-2zM136 336h2v2h-2zM142 336h2v2h-2zM146 336h2v2h-2zM110 338h2v2h-2zM118 338h2v2h-2zM130 338h2v2h-2zM136 338h2v2h-2zM110 340h2v2h-2zM118 340h2v2h-2zM120 340h2v2h-2zM122 340h2v2h-2zM126 340h2v2h-2zM128 340h2v2h-2zM130 340h2v2h-2zM136 340h2v2h-2zM142 340h2v2h-2zM146 340h2v2h-2z"/>
<path fill="#e01020" d="M172 320h8v6h-8zM170 324h12v12h-12z"/>
<path fill="#b8b8c0" d="M168 336h16v46h-16z"/>
<path fill="#fff" d="M170 336h12v44h-12z"/>
<path fill="#d8d8e0" d="M174 346h4v28h-4z"/>
<path fill="#e01020" d="M160 374h8v10h-8zM164 372h4v4h-4zM172 372h8v12h-8zM184 372h4v4h-4zM184 374h8v10h-8z"/>
<path fill="#1010d0" d="M0 352h64v32h-64z"/>
<path fill="#fff000" d="M2 354h60v28h-60z"/>
<path fill="#e01010" d="M3 356h1.9v1.9h-1.9zM4.9 356h1.9v1.9h-1.9zM6.8 356h1.9v1.9h-1.9zM8.7 356h1.9v1.9h-1.9zM12.5 356h1.9v1.9h-1.9zM14.4 356h1.9v1.9h-1.9zM16.3 356h1.9v1.9h-1.9zM18.2 356h1.9v1.9h-1.9zM22 356h1.9v1.9h-1.9zM27.7 356h1.9v1.9h-1.9zM31.5 356h1.9v1.9h-1.9zM33.4 356h1.9v1.9h-1.9zM35.3 356h1.9v1.9h-1.9zM37.2 356h1.9v1.9h-1.9zM41 356h1.9v1.9h-1.9zM42.9 356h1.9v1.9h-1.9zM44.8 356h1.9v1.9h-1.9zM46.7 356h1.9v1.9h-1.9zM50.5 356h1.9v1.9h-1.9zM54.3 356h1.9v1.9h-1.9zM56.2 356h1.9v1.9h-1.9zM58.1 356h1.9v1.9h-1.9zM60 356h1.9v1.9h-1.9zM3 357.9h1.9v1.9h-1.9zM12.5 357.9h1.9v1.9h-1.9zM22 357.9h1.9v1.9h-1.9zM23.9 357.9h1.9v1.9h-1.9zM27.7 357.9h1.9v1.9h-1.9zM31.5 357.9h1.9v1.9h-1.9zM41 357.9h1.9v1.9h-1.9zM50.5 357.9h1.9v1.9h-1.9zM54.3 357.9h1.9v1.9h-1.9zM3 359.8h1.9v1.9h-1.9zM6.8 359.8h1.9v1.9h-1.9zM8.7 359.8h1.9v1.9h-1.9zM12.5 359.8h1.9v1.9h-1.9zM14.4 359.8h1.9v1.9h-1.9zM16.3 359.8h1.9v1.9h-1.9zM22 359.8h1.9v1.9h-1.9zM25.8 359.8h1.9v1.9h-1.9zM27.7 359.8h1.9v1.9h-1.9zM31.5 359.8h1.9v1.9h-1.9zM33.4 359.8h1.9v1.9h-1.9zM35.3 359.8h1.9v1.9h-1.9zM41 359.8h1.9v1.9h-1.9zM42.9 359.8h1.9v1.9h-1.9zM44.8 359.8h1.9v1.9h-1.9zM46.7 359.8h1.9v1.9h-1.9zM50.5 359.8h1.9v1.9h-1.9zM54.3 359.8h1.9v1.9h-1.9zM56.2 359.8h1.9v1.9h-1.9zM58.1 359.8h1.9v1.9h-1.9zM60 359.8h1.9v1.9h-1.9zM3 361.7h1.9v1.9h-1.9zM8.7 361.7h1.9v1.9h-1.9zM12.5 361.7h1.9v1.9h-1.9zM22 361.7h1.9v1.9h-1.9zM27.7 361.7h1.9v1.9h-1.9zM31.5 361.7h1.9v1.9h-1.9zM46.7 361.7h1.9v1.9h-1.9zM50.5 361.7h1.9v1.9h-1.9zM60 361.7h1.9v1.9h-1.9zM3 363.6h1.9v1.9h-1.9zM4.9 363.6h1.9v1.9h-1.9zM6.8 363.6h1.9v1.9h-1.9zM8.7 363.6h1.9v1.9h-1.9zM12.5 363.6h1.9v1.9h-1.9zM14.4 363.6h1.9v1.9h-1.9zM16.3 363.6h1.9v1.9h-1.9zM18.2 363.6h1.9v1.9h-1.9zM22 363.6h1.9v1.9h-1.9zM27.7 363.6h1.9v1.9h-1.9zM31.5 363.6h1.9v1.9h-1.9zM33.4 363.6h1.9v1.9h-1.9zM35.3 363.6h1.9v1.9h-1.9zM37.2 363.6h1.9v1.9h-1.9zM41 363.6h1.9v1.9h-1.9zM42.9 363.6h1.9v1.9h-1.9zM44.8 363.6h1.9v1.9h-1.9zM46.7 363.6h1.9v1.9h-1.9zM50.5 363.6h1.9v1.9h-1.9zM54.3 363.6h1.9v1.9h-1.9zM56.2 363.6h1.9v1.9h-1.9zM58.1 363.6h1.9v1.9h-1.9zM60 363.6h1.9v1.9h-1.9z"/>
<path fill="#1a4a0a" d="M3 370h1.9v1.9h-1.9zM4.9 370h1.9v1.9h-1.9zM6.8 370h1.9v1.9h-1.9zM8.7 370h1.9v1.9h-1.9zM10.6 370h1.9v1.9h-1.9zM14.4 370h1.9v1.9h-1.9zM20.1 370h1.9v1.9h-1.9zM23.9 370h1.9v1.9h-1.9zM25.8 370h1.9v1.9h-1.9zM27.7 370h1.9v1.9h-1.9zM29.6 370h1.9v1.9h-1.9zM33.4 370h1.9v1.9h-1.9zM35.3 370h1.9v1.9h-1.9zM37.2 370h1.9v1.9h-1.9zM39.1 370h1.9v1.9h-1.9zM42.9 370h1.9v1.9h-1.9zM44.8 370h1.9v1.9h-1.9zM46.7 370h1.9v1.9h-1.9zM48.6 370h1.9v1.9h-1.9zM52.4 370h1.9v1.9h-1.9zM60 370h1.9v1.9h-1.9zM6.8 371.9h1.9v1.9h-1.9zM14.4 371.9h1.9v1.9h-1.9zM20.1 371.9h1.9v1.9h-1.9zM23.9 371.9h1.9v1.9h-1.9zM33.4 371.9h1.9v1.9h-1.9zM39.1 371.9h1.9v1.9h-1.9zM42.9 371.9h1.9v1.9h-1.9zM48.6 371.9h1.9v1.9h-1.9zM54.3 371.9h1.9v1.9h-1.9zM58.1 371.9h1.9v1.9h-1.9zM6.8 373.8h1.9v1.9h-1.9zM14.4 373.8h1.9v1.9h-1.9zM16.3 373.8h1.9v1.9h-1.9zM18.2 373.8h1.9v1.9h-1.9zM20.1 373.8h1.9v1.9h-1.9zM23.9 373.8h1.9v1.9h-1.9zM25.8 373.8h1.9v1.9h-1.9zM27.7 373.8h1.9v1.9h-1.9zM33.4 373.8h1.9v1.9h-1.9zM39.1 373.8h1.9v1.9h-1.9zM42.9 373.8h1.9v1.9h-1.9zM44.8 373.8h1.9v1.9h-1.9zM46.7 373.8h1.9v1.9h-1.9zM48.6 373.8h1.9v1.9h-1.9zM56.2 373.8h1.9v1.9h-1.9zM6.8 375.7h1.9v1.9h-1.9zM14.4 375.7h1.9v1.9h-1.9zM20.1 375.7h1.9v1.9h-1.9zM23.9 375.7h1.9v1.9h-1.9zM33.4 375.7h1.9v1.9h-1.9zM39.1 375.7h1.9v1.9h-1.9zM42.9 375.7h1.9v1.9h-1.9zM46.7 375.7h1.9v1.9h-1.9zM56.2 375.7h1.9v1.9h-1.9zM6.8 377.6h1.9v1.9h-1.9zM14.4 377.6h1.9v1.9h-1.9zM20.1 377.6h1.9v1.9h-1.9zM23.9 377.6h1.9v1.9h-1.9zM25.8 377.6h1.9v1.9h-1.9zM27.7 377.6h1.9v1.9h-1.9zM29.6 377.6h1.9v1.9h-1.9zM33.4 377.6h1.9v1.9h-1.9zM35.3 377.6h1.9v1.9h-1.9zM37.2 377.6h1.9v1.9h-1.9zM39.1 377.6h1.9v1.9h-1.9zM42.9 377.6h1.9v1.9h-1.9zM48.6 377.6h1.9v1.9h-1.9zM56.2 377.6h1.9v1.9h-1.9z"/>
<path fill="#2a0e04" d="M64 352h32v66h-32z"/>
<path fill="#8a8a9a" d="M98 354h22v22h-22z"/>
<path fill="#b0b0c0" d="M100 356h18v2h-18z"/>
<path fill="#3a3a5a" d="M102 358h6v16h-6z"/>
<path fill="#8a8a9a" d="M102 362h4v2h-4zM102 368h4v2h-4z"/>
<path fill="#5a5a6a" d="M110 360h8v8h-8z"/>
<path fill="#e02020" d="M110 370h4v2h-4z"/>
<path fill="#000" d="M130 352h28v32h-28z"/>
<path fill="#fff" d="M133 356h3v3h-3zM153 356h3v3h-3zM135 358h3v3h-3zM151 358h3v3h-3zM137 360h3v3h-3zM149 360h3v3h-3zM139 362h3v3h-3zM147 362h3v3h-3zM141 364h3v3h-3zM145 364h3v3h-3zM143 366h3v3h-3zM143 366h3v3h-3zM145 368h3v3h-3zM141 368h3v3h-3zM147 370h3v3h-3zM139 370h3v3h-3zM149 372h3v3h-3zM137 372h3v3h-3zM151 374h3v3h-3zM135 374h3v3h-3zM153 376h3v3h-3zM133 376h3v3h-3zM140 354h8v2h-8zM140 354h2v6h-2zM146 354h2v6h-2zM140 360h8v2h-8zM132 376h2v6h-2zM154 376h2v6h-2zM138 376h12v2h-12zM138 376h2v6h-2zM148 376h2v6h-2z"/>
<path fill="#a8d0f8" d="M0 384h32v58h-32z"/>
<path fill="#e8f2ff" d="M2 386h28v54h-28z"/>
<path fill="#a8d0f8" d="M6 388h22v2h-22zM6 388h2v46h-2zM26 388h2v46h-2z"/>
<path fill="#fff" d="M8 390h18v40h-18z"/>
<path fill="#a8d0f8" d="M8 396h18v2h-18z"/>
<path fill="#55555a" d="M10 430h4v4h-4zM16 426h4v8h-4zM22 430h4v4h-4z"/>
<path fill="#d8e4f4" d="M2 436h28v6h-28z"/>
<path fill="#fff" d="M40 388h12v18h-12z"/>
<path fill="#111" d="M42 390h8v2h-8zM42 394h8v2h-8zM42 398h8v2h-8zM42 402h8v2h-8z"/>
<path fill="#8b5a2b" d="M68 410h26v6h-26z"/>
<path fill="#2a0e04" d="M64 408h6v8h-6zM90 410h6v6h-6z"/>
<path fill="#6b3d14" d="M72 408h18v2h-18z"/>
<path fill="#4a2408" d="M96 384h32v48h-32z"/>
<path fill="#c49a68" d="M98 386h28v8h-28z"/>
<path fill="#a87840" d="M98 394h28v36h-28z"/>
<path fill="#4a2408" d="M128 384h32v48h-32z"/>
<path fill="#c49a68" d="M130 386h28v8h-28z"/>
<path fill="#a87840" d="M130 394h28v36h-28z"/>
<path fill="#4a2408" d="M160 384h32v48h-32z"/>
<path fill="#c49a68" d="M162 386h28v8h-28z"/>
<path fill="#a87840" d="M162 394h28v36h-28z"/>
<path fill="#3a1a06" d="M100 396h24v10h-24z"/>
<path fill="#e8d020" d="M102 398h4v8h-4z"/>
<path fill="#e01828" d="M108 398h4v8h-4z"/>
<path fill="#3858e0" d="M114 398h4v8h-4z"/>
<path fill="#48a028" d="M120 398h4v8h-4z"/>
<path fill="#3a1a06" d="M100 408h24v10h-24z"/>
<path fill="#38a028" d="M102 410h4v8h-4z"/>
<path fill="#3868e8" d="M108 410h4v8h-4z"/>
<path fill="#a028c0" d="M114 410h4v8h-4z"/>
<path fill="#3a1a06" d="M100 420h24v10h-24z"/>
<path fill="#c028c0" d="M106 422h4v8h-4z"/>
<path fill="#e01828" d="M112 422h4v8h-4z"/>
<path fill="#e8d020" d="M118 422h4v8h-4z"/>
<path fill="#3a1a06" d="M132 396h24v6h-24zM132 404h24v6h-24zM132 412h24v6h-24z"/>
<path fill="#5a3010" d="M132 422h24v8h-24z"/>
<path fill="#8b6030" d="M134 424h20v4h-20z"/>
<path fill="#f0e0c0" d="M142 424h4v4h-4z"/>
<path fill="#4a2408" d="M164 396h24v22h-24z"/>
<path fill="#b08850" d="M166 398h9v18h-9zM177 398h9v18h-9z"/>
<path fill="#3a1a06" d="M172 406h2v6h-2zM178 406h2v6h-2z"/>
<path fill="#4a2408" d="M164 420h24v10h-24z"/>
<path fill="#b08850" d="M166 422h20v6h-20z"/>
<path fill="#4a2408" d="M172 424h8v2h-8z"/>
<path fill="#2b2b2b" d="M32 428h32v4h-32z"/>
<path fill="#5a5a5e" d="M40 426h24v6h-24z"/>
<path fill="#2b2b2b" d="M40 426h24v2h-24z"/>
<path fill="#3c3c40" d="M42 432h6v8h-6z"/>
<path fill="#5a3010" d="M54 432h6v6h-6zM58 436h6v6h-6z"/>
<path fill="#4a1808" d="M66 422h2v2h-2zM70 422h2v2h-2zM74 422h2v2h-2zM78 422h2v2h-2zM82 422h2v2h-2zM86 422h2v2h-2zM90 422h2v2h-2zM94 422h2v2h-2zM68 424h2v2h-2zM72 424h2v2h-2zM76 424h2v2h-2zM80 424h2v2h-2zM84 424h2v2h-2zM88 424h2v2h-2zM92 424h2v2h-2zM96 424h2v2h-2zM66 426h2v2h-2zM70 426h2v2h-2zM74 426h2v2h-2zM78 426h2v2h-2zM82 426h2v2h-2zM86 426h2v2h-2zM90 426h2v2h-2zM94 426h2v2h-2zM68 428h2v2h-2zM72 428h2v2h-2zM76 428h2v2h-2zM80 428h2v2h-2zM84 428h2v2h-2zM88 428h2v2h-2zM92 428h2v2h-2zM96 428h2v2h-2zM66 430h2v2h-2zM70 430h2v2h-2zM74 430h2v2h-2zM78 430h2v2h-2zM82 430h2v2h-2zM86 430h2v2h-2zM90 430h2v2h-2zM94 430h2v2h-2z"/>
<path fill="#c09050" d="M66 430h28v12h-28z"/>
<path fill="#d8b070" d="M72 430h16v4h-16z"/>
<path fill="#ff648a" d="M66 430h6v4h-6zM90 430h4v4h-4z"/>
<path fill="#a87838" d="M68 436h24v6h-24z"/>
</svg></div>

<!-- left palette scrollbar -->
<div class="track" style="left:195px;top:108px;width:17px;height:442px"></div>
<div class="sbtn" style="left:195px;top:108px"><svg width="9" height="6"><path d="M0.500 5l4-4 4 4" fill="none" stroke="#3c4258" stroke-width="2"/></svg></div>
<div class="thumb" style="left:195px;top:125px;height:234px"><div class="grip" style="top:112px"></div></div>
<div class="sbtn" style="left:195px;top:533px"><svg width="9" height="6"><path d="M0.500 1l4 4 4-4" fill="none" stroke="#3c4258" stroke-width="2"/></svg></div>
<div class="abs" style="left:0;top:550px;width:214px;height:4px;background:#ebebef"></div>
<!-- tree -->
<div class="tree">
<div class="abs" style="left:29px;top:0;width:1px;height:163px;background:repeating-linear-gradient(#a0a0a8 0,#a0a0a8 1px,transparent 1px,transparent 2px)"></div>
<div class="ti" style="top:1px"><div class="hl"></div><div class="ic"></div><div class="tx">választás 2.nap</div></div>
<div class="ti" style="top:19px"><div class="hl"></div><div class="ic"></div><div class="tx">bálna</div></div>
<div class="ti" style="top:37px"><div class="hl"></div><div class="ic"></div><div class="tx">város2</div></div>
<div class="ti" style="top:55px"><div class="hl"></div><div class="pm"></div><div class="ic"></div><div class="tx">1. munka 3.nap</div></div>
<div class="ti" style="top:73px"><div class="hl"></div><div class="pm"></div><div class="ic"></div><div class="tx">2.munka 3.nap</div></div>
<div class="ti" style="top:91px"><div class="hl"></div><div class="pm"></div><div class="ic"></div><div class="tx" style="background:#b9b9cb;outline:1px dotted #55556a;outline-offset:-1px">3. munka 3.nap</div></div>
<div class="ti" style="top:109px"><div class="hl"></div><div class="ic"></div><div class="tx">végtelen semmi</div></div>
<div class="ti" style="top:127px"><div class="hl"></div><div class="ic"></div><div class="tx">végevégelegvége</div></div>
<div class="ti" style="top:145px"><div class="hl"></div><div class="pm"></div><div class="ic"></div><div class="tx">első vége</div></div>
</div>
<div class="track" style="left:195px;top:557px;width:17px;height:160px"></div>
<div class="sbtn" style="left:195px;top:557px"><svg width="9" height="6"><path d="M0.500 5l4-4 4 4" fill="none" stroke="#3c4258" stroke-width="2"/></svg></div>
<div class="thumb" style="left:195px;top:655px;height:33px"><div class="grip" style="top:12px"></div></div>
<div class="sbtn" style="left:195px;top:700px"><svg width="9" height="6"><path d="M0.500 1l4 4 4-4" fill="none" stroke="#3c4258" stroke-width="2"/></svg></div>
<div class="abs" style="left:212px;top:107px;width:3px;height:611px;background:#fff"></div>
<div class="abs" style="left:215px;top:78px;width:1px;height:640px;background:#e0dfe3"></div>
<!-- map scrollbars -->
<div class="abs" style="left:1005px;top:77px;width:17px;height:1px;background:#808085"></div>
<div class="track" style="left:1005px;top:78px;width:17px;height:622px;background:linear-gradient(90deg,#f2f2f8,#fff 50%)"></div>
<div class="abs" style="left:1022px;top:77px;width:2px;height:641px;background:#fff"></div>
<div class="sbtn" style="left:1006px;top:79px;background:#f1f0eb;border-color:#e4e3dc;box-shadow:0 0 0 1px #fbfbf8 inset"><svg width="9" height="6"><path d="M0.500 5l4-4 4 4" fill="none" stroke="#c4c4bc" stroke-width="2"/></svg></div>
<div class="sbtn" style="left:1006px;top:683px;background:#f1f0eb;border-color:#e4e3dc;box-shadow:0 0 0 1px #fbfbf8 inset"><svg width="9" height="6"><path d="M0.500 1l4 4 4-4" fill="none" stroke="#c4c4bc" stroke-width="2"/></svg></div>
<div class="track" style="left:217px;top:700px;width:807px;height:18px;background:linear-gradient(#ececf4,#fff 45%,#fbfbfe)"></div>
<div class="sbtn" style="left:217px;top:701px;width:16px;height:16px;background:#f1f0eb;border-color:#e4e3dc;box-shadow:0 0 0 1px #fbfbf8 inset"><svg width="6" height="9" style="left:4px;top:3px"><path d="M5 .5l-4 4 4 4" fill="none" stroke="#c4c4bc" stroke-width="2"/></svg></div>
<div class="sbtn" style="left:988px;top:701px;width:16px;height:16px;background:#f1f0eb;border-color:#e4e3dc;box-shadow:0 0 0 1px #fbfbf8 inset"><svg width="6" height="9" style="left:5px;top:3px"><path d="M1 .5l4 4-4 4" fill="none" stroke="#c4c4bc" stroke-width="2"/></svg></div>
<div id="status" class="abs">
<div class="abs" style="left:0;top:0;width:1024px;height:1px;background:#fff"></div>
</div>
<div class="sp" style="left:0;width:319px"></div>
<div class="sp" style="left:321px;width:142px">Event Editing Mode</div>
<div class="sp" style="left:465px;width:559px">3. munka 3.nap</div>

<div id="taskbar" class="abs">
<!-- start button -->
<div class="abs" style="left:0;top:-1px;width:100px;height:30px;border-radius:0 13px 15px 0/0 15px 17px 0;background:linear-gradient(#1f6b1f 0,#8fd48f 1px,#6cc06c 3px,#48a648 6px,#3a9a3a 10px,#46a646 15px,#3a9a3a 20px,#2a842a 25px,#1c661c 30px);box-shadow:inset -4px 0 4px -1px #1a5a1a,1px 0 0 #e8f4e8"></div>
<svg class="abs" style="left:9px;top:4px" width="22" height="20" viewBox="0 0 20 20" preserveAspectRatio="none"><path d="M2.500 3.500c2-1.500 4-1.500 6 0l-1.200 5.500c-2-1.500-4-1.500-6 0z" fill="#e8582c"/><path d="M10 4c2 1.500 4 1.500 6 0l-1.200 5.500c-2 1.500-4 1.500-6 0z" fill="#78c83c"/><path d="M1 10.500c2-1.500 4-1.500 6 0l-1.200 5.500c-2-1.500-4-1.500-6 0z" fill="#3c78e8"/><path d="M8.500 11c2 1.500 4 1.500 6 0l-1.200 5.500c-2 1.500-4 1.500-6 0z" fill="#f4c020"/></svg>
<div class="abs" style="left:34px;top:4px;font-size:17px;font-weight:bold;font-style:italic;color:#fbfbf3;text-shadow:1px 1px 1px #1a4a1a">Start</div>
<!-- task button -->
<div class="abs" style="left:109px;top:2px;width:160px;height:24px;border-radius:3px;background:linear-gradient(#5e6674,#6c7480 50%,#767e8a);box-shadow:inset 1px 1px 1px #464c58"></div>
<svg class="abs" style="left:119px;top:6px" width="16" height="17" viewBox="0 0 16 17"><path d="M5 1l2 1.500c3 0 6 2.500 6 7l1 3.500h-11l3-4-3 1-1.500-2 3-4z" fill="#d8d8d0" stroke="#111" stroke-width="1"/><rect x="2" y="13" width="12" height="3" fill="#e8e8e0" stroke="#111"/><circle cx="6" cy="5" r=".8" fill="#111"/></svg>
<div class="abs" style="left:138px;top:8px;font-size:11px;color:#fff;transform:scaleX(.935);transform-origin:0 0;white-space:nowrap">RPG Maker 2003</div>
<!-- tray -->
<div class="abs" style="left:100px;top:-1px;width:778px;height:1px;background:#85859c"></div>
<div class="abs" style="left:878px;top:0;width:146px;height:29px;background:linear-gradient(#ffffff 0,#f6f6fa 6px,#e4e4ee 14px,#d0d0de 22px,#b4b4c8 28px);border-left:1px solid #8c8ca4"></div>
<div class="abs" style="left:842px;top:6px;width:16px;height:15px;background:#c4c4d4;font-size:11.500px;line-height:15px;text-align:center;letter-spacing:-.3px">HU</div>
<svg class="abs" style="left:866px;top:3px" width="22" height="22" viewBox="0 0 22 22"><defs><radialGradient id="cg" cx=".4" cy=".35" r=".7"><stop offset="0" stop-color="#c8c8dc"/><stop offset="1" stop-color="#7c7c98"/></radialGradient></defs><circle cx="11" cy="11" r="9.500" fill="url(#cg)" stroke="#f4f4fa" stroke-width="1.500"/><path d="M13 6.500l-4.500 4.500 4.500 4.500" fill="none" stroke="#fff" stroke-width="2.200"/></svg>
<!-- shield -->
<svg class="abs" style="left:889px;top:6px" width="14" height="16" viewBox="0 0 14 16"><path d="M7 .8c2 1.500 4 1.800 6 1.800 0 6-1.500 10-6 12.600-4.500-2.600-6-6.600-6-12.600 2 0 4-.3 6-1.800z" fill="#f0d020" stroke="#8a7410" stroke-width="1"/><rect x="6.200" y="4" width="1.800" height="5" fill="#222"/><rect x="6.200" y="10" width="1.800" height="1.800" fill="#222"/></svg>
<!-- window + lock -->
<svg class="abs" style="left:907px;top:7px" width="16" height="15" viewBox="0 0 16 15"><rect x="2.500" y=".5" width="13" height="11" fill="#fff" stroke="#223"/><rect x="3" y="1" width="12" height="2.500" fill="#2038c0"/><path d="M8 6h5M8 8h5" stroke="#99a"/><rect x=".5" y="9" width="7" height="5.500" fill="#222"/><path d="M2 9v-2a2 2 0 0 1 4 0v2" fill="none" stroke="#222" stroke-width="1.300"/><rect x="2" y="11" width="4" height="1.500" fill="#ccc"/></svg>
<!-- messenger -->
<svg class="abs" style="left:925px;top:6px" width="16" height="16" viewBox="0 0 16 16"><circle cx="6" cy="4" r="3.300" fill="#5aa8e8" stroke="#2868b0" stroke-width=".8"/><path d="M1 15c-1-5 1.500-8 5-8s6 3 5 8z" fill="#5aa8e8" stroke="#2868b0" stroke-width=".8"/><rect x="8.500" y="9" width="7" height="6.500" rx="1.500" fill="#48d038" stroke="#1a7a18"/><rect x="10.500" y="11.800" width="3" height="1.200" fill="#e8ffe0"/></svg>
<!-- orange monitor -->
<svg class="abs" style="left:942px;top:6px" width="15" height="15" viewBox="0 0 15 15"><rect x=".5" y=".5" width="14" height="11" rx="1" fill="#d89040" stroke="#a06020"/><rect x="2" y="2" width="11" height="7" fill="#b05810"/><path d="M6.500 3.500v4l3-2z" fill="#f8e0b0"/><rect x="1" y="12" width="13" height="2.500" fill="#c88038"/></svg>
<!-- avira -->
<svg class="abs" style="left:960px;top:6px" width="16" height="16" viewBox="0 0 16 16"><rect width="16" height="16" fill="#d81820"/><path d="M2.500 13c1-5 3-9 6-9.500 2.500 0 3 2.500 1.500 4 2 .5 3.500 3 4 5.500" fill="none" stroke="#fff" stroke-width="1.800"/><path d="M5.500 9c1.500-1 3-1.300 4.500-1.500" fill="none" stroke="#fff" stroke-width="1.500"/></svg>
<div class="abs" style="left:983px;top:8px;font-size:11px">14:49</div>
</div>
<!-- blue gauge widget -->
<svg class="abs" style="left:971px;top:697px" width="54" height="43" viewBox="0 0 54 43">
<rect x="49" y="2" width="5" height="13" fill="#141408"/><rect x="51" y="3" width="1.500" height="4" fill="#e8d040"/><path d="M53 9.500h-2.500v2h2.500v2h-2.500" stroke="#30d030" stroke-width="1.200" fill="none"/>
<path d="M2 41c0-18 14-29 30-29 9 0 17 4 22 10v19z" fill="#0a2270" stroke="#1c48b4" stroke-width="2"/>
<path d="M8 39c1-12 11-22 24-22 8 0 15 3 20 8" fill="none" stroke="#0e2e88" stroke-width="3"/>
<text x="27.500" y="21.500" font-family="Liberation Sans" font-weight="bold" font-size="8" fill="#d8e840">8</text><path d="M24.500 18h2" stroke="#d8e840"/>
<path d="M19 26c0-2 2-3 3.500-2 1-1.500 4-1 4 1.500 1.500 0 1.500 2.500 0 2.500h-7c-1.500 0-1.500-2-.5-2z" fill="#3c78e8"/>
<rect x="28" y="29" width="2" height="6" fill="#e04838"/><rect x="36" y="28" width="6" height="7" rx="1" fill="#28c838"/>
<path d="M10 29v9M12 31v7M46 29v9" stroke="#1c44a4"/>
</svg>
</body></html>
